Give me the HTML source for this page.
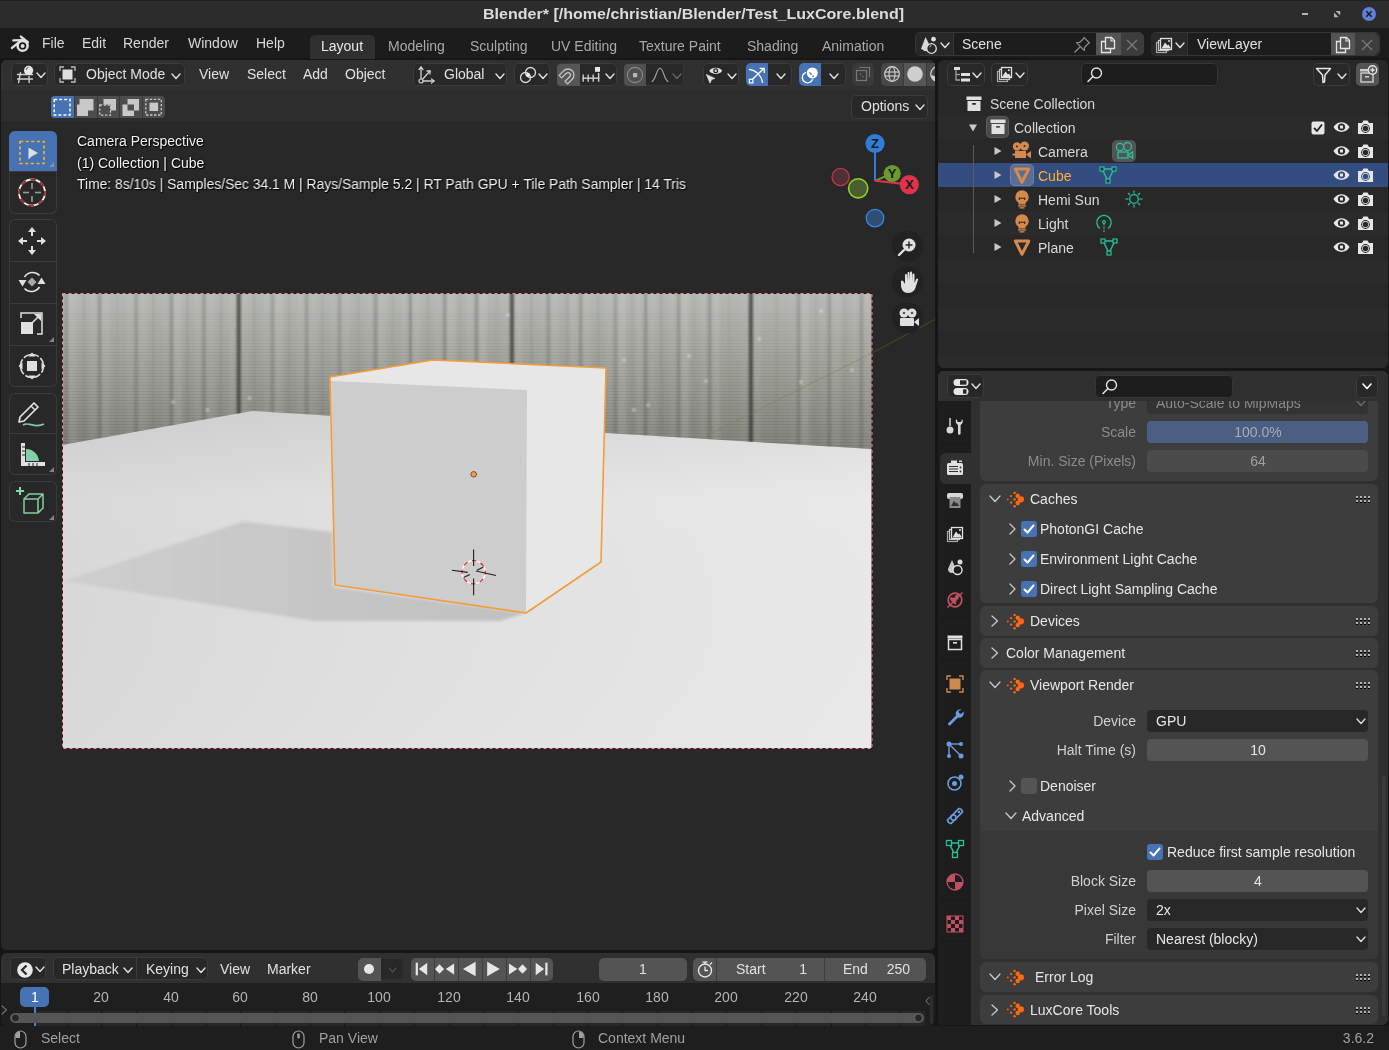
<!DOCTYPE html>
<html><head><meta charset="utf-8"><style>
html,body{margin:0;padding:0;}
body{width:1389px;height:1050px;overflow:hidden;position:relative;background:#161616;font-family:"Liberation Sans",sans-serif;}
body>div,body>svg{position:absolute;}
svg{overflow:visible;}
</style></head><body>
<div style="left:0px;top:0px;width:1389px;height:28px;background:#2c2c2c;"></div>
<div style="left:483.00px;top:5.80px;font-size:15px;line-height:15px;color:#dcdcdc;white-space:pre;font-weight:bold;transform:scaleX(1.0687);transform-origin:left center;will-change:transform;">Blender* [/home/christian/Blender/Test_LuxCore.blend]</div>
<div style="left:0px;top:28px;width:1389px;height:29.5px;background:#1c1c1c;"></div>
<div style="left:42.00px;top:36.45px;font-size:14px;line-height:14px;color:#d8d8d8;white-space:pre;will-change:transform;">File</div>
<div style="left:81.50px;top:36.45px;font-size:14px;line-height:14px;color:#d8d8d8;white-space:pre;will-change:transform;">Edit</div>
<div style="left:123.40px;top:36.45px;font-size:14px;line-height:14px;color:#d8d8d8;white-space:pre;will-change:transform;">Render</div>
<div style="left:187.50px;top:36.45px;font-size:14px;line-height:14px;color:#d8d8d8;white-space:pre;will-change:transform;">Window</div>
<div style="left:255.60px;top:36.45px;font-size:14px;line-height:14px;color:#d8d8d8;white-space:pre;will-change:transform;">Help</div>
<div style="left:310px;top:35px;width:65px;height:24px;background:#303030;border-radius:5px 5px 0 0;"></div>
<div style="left:321.00px;top:38.95px;font-size:14px;line-height:14px;color:#e8e8e8;white-space:pre;will-change:transform;">Layout</div>
<div style="left:388.00px;top:38.95px;font-size:14px;line-height:14px;color:#a8a8a8;white-space:pre;will-change:transform;">Modeling</div>
<div style="left:470.00px;top:38.95px;font-size:14px;line-height:14px;color:#a8a8a8;white-space:pre;will-change:transform;">Sculpting</div>
<div style="left:551.00px;top:38.95px;font-size:14px;line-height:14px;color:#a8a8a8;white-space:pre;will-change:transform;">UV Editing</div>
<div style="left:639.00px;top:38.95px;font-size:14px;line-height:14px;color:#a8a8a8;white-space:pre;will-change:transform;">Texture Paint</div>
<div style="left:747.00px;top:38.95px;font-size:14px;line-height:14px;color:#a8a8a8;white-space:pre;will-change:transform;">Shading</div>
<div style="left:822.00px;top:38.95px;font-size:14px;line-height:14px;color:#a8a8a8;white-space:pre;will-change:transform;">Animation</div>
<div style="left:1px;top:60px;width:934px;height:890px;background:#282828;border-radius:6px;overflow:hidden;"></div>
<div style="left:1px;top:60px;width:934px;height:30px;background:#303030;border-radius:6px 6px 0 0;"></div>
<div style="left:1px;top:90px;width:934px;height:31px;background:#2d2d2d;"></div>
<div style="left:938px;top:60px;width:450px;height:308px;background:#282828;border-radius:6px;"></div>
<div style="left:938px;top:371px;width:450px;height:654px;background:#303030;border-radius:6px;"></div>
<div style="left:1px;top:953px;width:934px;height:72.5px;background:#1f1f1f;border-radius:6px;"></div>
<div style="left:1px;top:953px;width:934px;height:30px;background:#303030;border-radius:6px 6px 0 0;"></div>
<div style="left:0px;top:1026px;width:1389px;height:24px;background:#1e1e1e;"></div>
<svg style="left:62px;top:293px;" width="810" height="456" viewBox="0 0 810 456">
<defs>
  <linearGradient id="wallg" x1="0" y1="0" x2="0" y2="1">
    <stop offset="0" stop-color="#b6b8b4"/>
    <stop offset="0.5" stop-color="#9c9d96"/>
    <stop offset="1" stop-color="#80817a"/>
  </linearGradient>
  <linearGradient id="floorh" x1="0" y1="0" x2="1" y2="0">
    <stop offset="0" stop-color="#d9d9d9"/>
    <stop offset="0.45" stop-color="#e1e1e1"/>
    <stop offset="1" stop-color="#e9e9e9"/>
  </linearGradient>
  <linearGradient id="floorv" x1="0" y1="0" x2="0" y2="1">
    <stop offset="0.22" stop-color="#000" stop-opacity="0.07"/>
    <stop offset="0.45" stop-color="#000" stop-opacity="0.0"/>
    <stop offset="1" stop-color="#fff" stop-opacity="0.02"/>
  </linearGradient>
  <linearGradient id="shadg" x1="0" y1="0" x2="1" y2="0">
    <stop offset="0" stop-color="#cecece"/>
    <stop offset="0.5" stop-color="#c6c6c6"/>
    <stop offset="1" stop-color="#c0c0c0"/>
  </linearGradient>
  <clipPath id="wallclip"><polygon points="0,0 810,0 810,156 544,140 190,118 0,152"/></clipPath>
  <filter id="blur1" x="-10%" y="-10%" width="120%" height="120%"><feGaussianBlur stdDeviation="1.6"/></filter>
  <filter id="blur05" x="-10%" y="-10%" width="120%" height="120%"><feGaussianBlur stdDeviation="0.9"/></filter>
  <filter id="blur2" x="-10%" y="-20%" width="120%" height="140%"><feGaussianBlur stdDeviation="1.5"/></filter>
</defs>
<rect x="0" y="0" width="810" height="456" fill="url(#floorh)"/>
<rect x="0" y="0" width="810" height="456" fill="url(#floorv)"/>
<g clip-path="url(#wallclip)">
<rect x="0" y="0" width="810" height="160" fill="url(#wallg)"/>
<g filter="url(#blur1)"><rect x="6.6" y="0" width="8" height="170" fill="#ffffff" opacity="0.08"/>
<rect x="-5.4" y="0" width="6" height="170" fill="#ffffff" opacity="0.05"/>
<rect x="1.6" y="0" width="3" height="170" fill="#50504a" opacity="0.16"/>
<rect x="40.0" y="0" width="8" height="170" fill="#ffffff" opacity="0.08"/>
<rect x="28.0" y="0" width="6" height="170" fill="#ffffff" opacity="0.05"/>
<rect x="35.0" y="0" width="3" height="170" fill="#50504a" opacity="0.14"/>
<rect x="76.7" y="0" width="8" height="170" fill="#ffffff" opacity="0.06"/>
<rect x="64.7" y="0" width="6" height="170" fill="#ffffff" opacity="0.05"/>
<rect x="71.7" y="0" width="3" height="170" fill="#50504a" opacity="0.14"/>
<rect x="111.8" y="0" width="8" height="170" fill="#ffffff" opacity="0.10"/>
<rect x="99.8" y="0" width="6" height="170" fill="#ffffff" opacity="0.03"/>
<rect x="106.8" y="0" width="3" height="170" fill="#50504a" opacity="0.12"/>
<rect x="144.5" y="0" width="8" height="170" fill="#ffffff" opacity="0.06"/>
<rect x="132.5" y="0" width="6" height="170" fill="#ffffff" opacity="0.06"/>
<rect x="139.5" y="0" width="3" height="170" fill="#50504a" opacity="0.14"/>
<rect x="178.8" y="0" width="8" height="170" fill="#ffffff" opacity="0.05"/>
<rect x="166.8" y="0" width="6" height="170" fill="#ffffff" opacity="0.07"/>
<rect x="173.8" y="0" width="3" height="170" fill="#50504a" opacity="0.16"/>
<rect x="213.0" y="0" width="8" height="170" fill="#ffffff" opacity="0.09"/>
<rect x="201.0" y="0" width="6" height="170" fill="#ffffff" opacity="0.05"/>
<rect x="208.0" y="0" width="3" height="170" fill="#50504a" opacity="0.11"/>
<rect x="247.0" y="0" width="8" height="170" fill="#ffffff" opacity="0.05"/>
<rect x="235.0" y="0" width="6" height="170" fill="#ffffff" opacity="0.05"/>
<rect x="242.0" y="0" width="3" height="170" fill="#50504a" opacity="0.10"/>
<rect x="280.0" y="0" width="8" height="170" fill="#ffffff" opacity="0.06"/>
<rect x="268.0" y="0" width="6" height="170" fill="#ffffff" opacity="0.04"/>
<rect x="275.0" y="0" width="3" height="170" fill="#50504a" opacity="0.10"/>
<rect x="316.0" y="0" width="8" height="170" fill="#ffffff" opacity="0.08"/>
<rect x="304.0" y="0" width="6" height="170" fill="#ffffff" opacity="0.05"/>
<rect x="311.0" y="0" width="3" height="170" fill="#50504a" opacity="0.15"/>
<rect x="350.6" y="0" width="8" height="170" fill="#ffffff" opacity="0.08"/>
<rect x="338.6" y="0" width="6" height="170" fill="#ffffff" opacity="0.06"/>
<rect x="345.6" y="0" width="3" height="170" fill="#50504a" opacity="0.13"/>
<rect x="385.0" y="0" width="8" height="170" fill="#ffffff" opacity="0.09"/>
<rect x="373.0" y="0" width="6" height="170" fill="#ffffff" opacity="0.05"/>
<rect x="380.0" y="0" width="3" height="170" fill="#50504a" opacity="0.12"/>
<rect x="417.0" y="0" width="8" height="170" fill="#ffffff" opacity="0.11"/>
<rect x="405.0" y="0" width="6" height="170" fill="#ffffff" opacity="0.07"/>
<rect x="412.0" y="0" width="3" height="170" fill="#50504a" opacity="0.15"/>
<rect x="452.0" y="0" width="8" height="170" fill="#ffffff" opacity="0.09"/>
<rect x="440.0" y="0" width="6" height="170" fill="#ffffff" opacity="0.04"/>
<rect x="447.0" y="0" width="3" height="170" fill="#50504a" opacity="0.11"/>
<rect x="489.0" y="0" width="8" height="170" fill="#ffffff" opacity="0.07"/>
<rect x="477.0" y="0" width="6" height="170" fill="#ffffff" opacity="0.03"/>
<rect x="484.0" y="0" width="3" height="170" fill="#50504a" opacity="0.15"/>
<rect x="521.0" y="0" width="8" height="170" fill="#ffffff" opacity="0.07"/>
<rect x="509.0" y="0" width="6" height="170" fill="#ffffff" opacity="0.06"/>
<rect x="516.0" y="0" width="3" height="170" fill="#50504a" opacity="0.12"/>
<rect x="556.0" y="0" width="8" height="170" fill="#ffffff" opacity="0.11"/>
<rect x="544.0" y="0" width="6" height="170" fill="#ffffff" opacity="0.06"/>
<rect x="551.0" y="0" width="3" height="170" fill="#50504a" opacity="0.10"/>
<rect x="586.0" y="0" width="8" height="170" fill="#ffffff" opacity="0.06"/>
<rect x="574.0" y="0" width="6" height="170" fill="#ffffff" opacity="0.07"/>
<rect x="581.0" y="0" width="3" height="170" fill="#50504a" opacity="0.13"/>
<rect x="619.0" y="0" width="8" height="170" fill="#ffffff" opacity="0.11"/>
<rect x="607.0" y="0" width="6" height="170" fill="#ffffff" opacity="0.05"/>
<rect x="614.0" y="0" width="3" height="170" fill="#50504a" opacity="0.10"/>
<rect x="650.0" y="0" width="8" height="170" fill="#ffffff" opacity="0.09"/>
<rect x="638.0" y="0" width="6" height="170" fill="#ffffff" opacity="0.06"/>
<rect x="645.0" y="0" width="3" height="170" fill="#50504a" opacity="0.12"/>
<rect x="691.0" y="0" width="8" height="170" fill="#ffffff" opacity="0.06"/>
<rect x="679.0" y="0" width="6" height="170" fill="#ffffff" opacity="0.04"/>
<rect x="686.0" y="0" width="3" height="170" fill="#50504a" opacity="0.16"/>
<rect x="739.0" y="0" width="8" height="170" fill="#ffffff" opacity="0.10"/>
<rect x="727.0" y="0" width="6" height="170" fill="#ffffff" opacity="0.03"/>
<rect x="734.0" y="0" width="3" height="170" fill="#50504a" opacity="0.11"/>
<rect x="770.0" y="0" width="8" height="170" fill="#ffffff" opacity="0.06"/>
<rect x="758.0" y="0" width="6" height="170" fill="#ffffff" opacity="0.03"/>
<rect x="765.0" y="0" width="3" height="170" fill="#50504a" opacity="0.15"/>
<rect x="802.0" y="0" width="8" height="170" fill="#ffffff" opacity="0.06"/>
<rect x="790.0" y="0" width="6" height="170" fill="#ffffff" opacity="0.05"/>
<rect x="797.0" y="0" width="3" height="170" fill="#50504a" opacity="0.13"/></g><g filter="url(#blur05)"><rect x="4.0" y="0" width="1.3" height="170" fill="#45453f" opacity="0.29"/>
<rect x="21.7" y="0" width="1" height="170" fill="#4a4a44" opacity="0.12"/>
<rect x="37.4" y="0" width="1.3" height="170" fill="#45453f" opacity="0.38"/>
<rect x="54.3" y="0" width="1" height="170" fill="#4a4a44" opacity="0.16"/>
<rect x="74.1" y="0" width="1.3" height="170" fill="#45453f" opacity="0.29"/>
<rect x="90.8" y="0" width="1" height="170" fill="#4a4a44" opacity="0.25"/>
<rect x="109.2" y="0" width="1.3" height="170" fill="#45453f" opacity="0.41"/>
<rect x="124.9" y="0" width="1" height="170" fill="#4a4a44" opacity="0.23"/>
<rect x="141.9" y="0" width="1.3" height="170" fill="#45453f" opacity="0.29"/>
<rect x="158.7" y="0" width="1" height="170" fill="#4a4a44" opacity="0.23"/>
<rect x="176.2" y="0" width="1.3" height="170" fill="#45453f" opacity="0.38"/>
<rect x="191.8" y="0" width="1" height="170" fill="#4a4a44" opacity="0.25"/>
<rect x="210.4" y="0" width="1.3" height="170" fill="#45453f" opacity="0.29"/>
<rect x="226.5" y="0" width="1" height="170" fill="#4a4a44" opacity="0.22"/>
<rect x="244.4" y="0" width="1.3" height="170" fill="#45453f" opacity="0.32"/>
<rect x="260.2" y="0" width="1" height="170" fill="#4a4a44" opacity="0.11"/>
<rect x="277.4" y="0" width="1.3" height="170" fill="#45453f" opacity="0.27"/>
<rect x="295.8" y="0" width="1" height="170" fill="#4a4a44" opacity="0.14"/>
<rect x="313.4" y="0" width="1.3" height="170" fill="#45453f" opacity="0.37"/>
<rect x="330.3" y="0" width="1" height="170" fill="#4a4a44" opacity="0.17"/>
<rect x="348.0" y="0" width="1.3" height="170" fill="#45453f" opacity="0.44"/>
<rect x="365.2" y="0" width="1" height="170" fill="#4a4a44" opacity="0.19"/>
<rect x="382.4" y="0" width="1.3" height="170" fill="#45453f" opacity="0.42"/>
<rect x="397.2" y="0" width="1" height="170" fill="#4a4a44" opacity="0.12"/>
<rect x="414.4" y="0" width="1.3" height="170" fill="#45453f" opacity="0.43"/>
<rect x="433.3" y="0" width="1" height="170" fill="#4a4a44" opacity="0.14"/>
<rect x="449.4" y="0" width="1.3" height="170" fill="#45453f" opacity="0.29"/>
<rect x="469.0" y="0" width="1" height="170" fill="#4a4a44" opacity="0.24"/>
<rect x="486.4" y="0" width="1.3" height="170" fill="#45453f" opacity="0.29"/>
<rect x="504.3" y="0" width="1" height="170" fill="#4a4a44" opacity="0.23"/>
<rect x="518.4" y="0" width="1.3" height="170" fill="#45453f" opacity="0.37"/>
<rect x="535.7" y="0" width="1" height="170" fill="#4a4a44" opacity="0.12"/>
<rect x="553.4" y="0" width="1.3" height="170" fill="#45453f" opacity="0.26"/>
<rect x="570.4" y="0" width="1" height="170" fill="#4a4a44" opacity="0.14"/>
<rect x="583.4" y="0" width="1.3" height="170" fill="#45453f" opacity="0.39"/>
<rect x="599.0" y="0" width="1" height="170" fill="#4a4a44" opacity="0.22"/>
<rect x="616.4" y="0" width="1.3" height="170" fill="#45453f" opacity="0.37"/>
<rect x="631.2" y="0" width="1" height="170" fill="#4a4a44" opacity="0.13"/>
<rect x="647.4" y="0" width="1.3" height="170" fill="#45453f" opacity="0.39"/>
<rect x="666.3" y="0" width="1" height="170" fill="#4a4a44" opacity="0.13"/>
<rect x="688.4" y="0" width="1.3" height="170" fill="#45453f" opacity="0.36"/>
<rect x="713.9" y="0" width="1" height="170" fill="#4a4a44" opacity="0.19"/>
<rect x="736.4" y="0" width="1.3" height="170" fill="#45453f" opacity="0.31"/>
<rect x="753.7" y="0" width="1" height="170" fill="#4a4a44" opacity="0.13"/>
<rect x="767.4" y="0" width="1.3" height="170" fill="#45453f" opacity="0.25"/>
<rect x="782.6" y="0" width="1" height="170" fill="#4a4a44" opacity="0.17"/>
<rect x="799.4" y="0" width="1.3" height="170" fill="#45453f" opacity="0.26"/>
<rect x="174.8" y="0" width="4" height="170" fill="#2e2e2a" opacity="0.6"/>
<rect x="448" y="0" width="4" height="170" fill="#2e2e2a" opacity="0.6"/>
<rect x="687" y="0" width="4" height="170" fill="#2e2e2a" opacity="0.6"/></g><rect x="0" y="20" width="810" height="1" fill="#3a3a34" opacity="0.040"/><rect x="0" y="23" width="810" height="1" fill="#3a3a34" opacity="0.040"/><rect x="0" y="26" width="810" height="1" fill="#3a3a34" opacity="0.040"/><rect x="0" y="29" width="810" height="1" fill="#3a3a34" opacity="0.040"/><rect x="0" y="32" width="810" height="1" fill="#3a3a34" opacity="0.042"/><rect x="0" y="35" width="810" height="1" fill="#3a3a34" opacity="0.044"/><rect x="0" y="38" width="810" height="1" fill="#3a3a34" opacity="0.046"/><rect x="0" y="41" width="810" height="1" fill="#3a3a34" opacity="0.048"/><rect x="0" y="44" width="810" height="1" fill="#3a3a34" opacity="0.051"/><rect x="0" y="47" width="810" height="1" fill="#3a3a34" opacity="0.053"/><rect x="0" y="50" width="810" height="1" fill="#3a3a34" opacity="0.055"/><rect x="0" y="53" width="810" height="1" fill="#3a3a34" opacity="0.058"/><rect x="0" y="56" width="810" height="1" fill="#3a3a34" opacity="0.060"/><rect x="0" y="59" width="810" height="1" fill="#3a3a34" opacity="0.062"/><rect x="0" y="62" width="810" height="1" fill="#3a3a34" opacity="0.065"/><rect x="0" y="65" width="810" height="1" fill="#3a3a34" opacity="0.067"/><rect x="0" y="68" width="810" height="1" fill="#3a3a34" opacity="0.069"/><rect x="0" y="71" width="810" height="1" fill="#3a3a34" opacity="0.072"/><rect x="0" y="74" width="810" height="1" fill="#3a3a34" opacity="0.074"/><rect x="0" y="77" width="810" height="1" fill="#3a3a34" opacity="0.076"/><rect x="0" y="80" width="810" height="1" fill="#3a3a34" opacity="0.078"/><rect x="0" y="83" width="810" height="1" fill="#3a3a34" opacity="0.081"/><rect x="0" y="86" width="810" height="1" fill="#3a3a34" opacity="0.083"/><rect x="0" y="89" width="810" height="1" fill="#3a3a34" opacity="0.085"/><rect x="0" y="92" width="810" height="1" fill="#3a3a34" opacity="0.088"/><rect x="0" y="95" width="810" height="1" fill="#3a3a34" opacity="0.090"/><rect x="0" y="98" width="810" height="1" fill="#3a3a34" opacity="0.092"/><rect x="0" y="101" width="810" height="1" fill="#3a3a34" opacity="0.095"/><rect x="0" y="104" width="810" height="1" fill="#3a3a34" opacity="0.097"/><rect x="0" y="107" width="810" height="1" fill="#3a3a34" opacity="0.099"/><rect x="0" y="110" width="810" height="1" fill="#3a3a34" opacity="0.102"/><rect x="0" y="113" width="810" height="1" fill="#3a3a34" opacity="0.104"/><rect x="0" y="116" width="810" height="1" fill="#3a3a34" opacity="0.106"/><rect x="0" y="119" width="810" height="1" fill="#3a3a34" opacity="0.108"/><rect x="0" y="122" width="810" height="1" fill="#3a3a34" opacity="0.111"/><rect x="0" y="125" width="810" height="1" fill="#3a3a34" opacity="0.113"/><rect x="0" y="128" width="810" height="1" fill="#3a3a34" opacity="0.115"/><rect x="0" y="131" width="810" height="1" fill="#3a3a34" opacity="0.118"/><rect x="0" y="134" width="810" height="1" fill="#3a3a34" opacity="0.120"/><rect x="0" y="137" width="810" height="1" fill="#3a3a34" opacity="0.122"/><rect x="0" y="140" width="810" height="1" fill="#3a3a34" opacity="0.125"/><rect x="0" y="143" width="810" height="1" fill="#3a3a34" opacity="0.127"/><rect x="0" y="146" width="810" height="1" fill="#3a3a34" opacity="0.129"/><rect x="0" y="149" width="810" height="1" fill="#3a3a34" opacity="0.132"/><rect x="0" y="152" width="810" height="1" fill="#3a3a34" opacity="0.134"/><rect x="0" y="155" width="810" height="1" fill="#3a3a34" opacity="0.136"/><rect x="0" y="158" width="810" height="1" fill="#3a3a34" opacity="0.138"/>
<circle cx="111" cy="109" r="1.8" fill="#eeeeee" opacity="0.55" filter="url(#blur05)"/><circle cx="145.6" cy="117" r="1.8" fill="#eeeeee" opacity="0.55" filter="url(#blur05)"/><circle cx="187.5" cy="105" r="1.8" fill="#eeeeee" opacity="0.55" filter="url(#blur05)"/><circle cx="446" cy="22" r="1.8" fill="#eeeeee" opacity="0.55" filter="url(#blur05)"/><circle cx="418" cy="118" r="1.8" fill="#eeeeee" opacity="0.55" filter="url(#blur05)"/><circle cx="562" cy="67" r="1.8" fill="#eeeeee" opacity="0.55" filter="url(#blur05)"/><circle cx="572" cy="117" r="1.8" fill="#eeeeee" opacity="0.55" filter="url(#blur05)"/><circle cx="586" cy="112" r="1.8" fill="#eeeeee" opacity="0.55" filter="url(#blur05)"/><circle cx="627" cy="63" r="1.8" fill="#eeeeee" opacity="0.55" filter="url(#blur05)"/><circle cx="644" cy="88" r="1.8" fill="#eeeeee" opacity="0.55" filter="url(#blur05)"/><circle cx="697" cy="46" r="1.8" fill="#eeeeee" opacity="0.55" filter="url(#blur05)"/><circle cx="739" cy="89" r="1.8" fill="#eeeeee" opacity="0.55" filter="url(#blur05)"/><circle cx="790" cy="77" r="1.8" fill="#eeeeee" opacity="0.55" filter="url(#blur05)"/><circle cx="759" cy="18" r="1.8" fill="#eeeeee" opacity="0.55" filter="url(#blur05)"/>
</g>
<line x1="640" y1="145" x2="810" y2="60" stroke="#6d8a4a" stroke-width="1" opacity="0.5"/>
<polygon points="1,288 181.6,228.6 271,239 271,294 464,320 438,328 253,328" fill="url(#shadg)" filter="url(#blur2)"/>
<polygon points="268,84 371,67 544,75 539,269 464,320 273,292" fill="#e7e7e7"/>
<polygon points="269,88 465,97 464,320 273,292" fill="#cdcdcd"/>
<polygon points="268,84 371,67 544,75 539,269 464,320 273,292" fill="none" stroke="#f39c3c" stroke-width="1.6" stroke-linejoin="round"/>
<circle cx="411.7" cy="181.3" r="2.8" fill="#f5a032" stroke="#333" stroke-width="0.7"/>
<rect x="0.5" y="0.5" width="809.5" height="455" fill="none" stroke="#1a1a1a" stroke-width="1"/>
<rect x="0.5" y="0.5" width="809.5" height="455" fill="none" stroke="#ff8888" stroke-width="1" stroke-dasharray="3,3"/>
</svg>
<svg style="left:450px;top:548px;" width="48" height="48" viewBox="0 0 48 48">
<circle cx="23.6" cy="24.2" r="11.6" fill="none" stroke="#ffffff" stroke-width="1.3"/>
<circle cx="23.6" cy="24.2" r="11.6" fill="none" stroke="#e02828" stroke-width="1.3" stroke-dasharray="4.55,4.55" stroke-dashoffset="2"/>
<g stroke="#202020" stroke-width="1.1">
<line x1="23.6" y1="1.4" x2="23.6" y2="18"/><line x1="23.6" y1="30.6" x2="23.6" y2="47.3"/>
<line x1="2" y1="22.3" x2="17.8" y2="24.4"/><line x1="26" y1="23" x2="46" y2="27.5"/>
<line x1="13.6" y1="29.6" x2="19.9" y2="26.4"/><line x1="27" y1="22.3" x2="33.4" y2="19"/></g></svg>
<div style="left:11px;top:63px;width:37px;height:23px;background:#282828;border-radius:5px;box-shadow:inset 0 0 0 1px #3b3b3b;"></div>
<svg style="left:17px;top:65px;" width="22" height="18" viewBox="0 0 22 18">
<g stroke="#cfcfcf" stroke-width="1.4" fill="none" stroke-linecap="round">
<line x1="0.5" y1="9.5" x2="15.5" y2="9.5"/><line x1="0.5" y1="14" x2="15.5" y2="14"/>
<line x1="3.4" y1="7.8" x2="1.6" y2="17.6"/><line x1="12" y1="11.5" x2="12.2" y2="17.6"/></g>
<circle cx="11.6" cy="5.4" r="4.6" fill="#e6e6e6"/><path d="M9.2,4.9 a2.6,2.6 0 0 1 2.3,-2.4" stroke="#444" stroke-width="0.9" fill="none"/></svg>
<svg style="left:35.5px;top:72.25px;" width="10" height="6.5" viewBox="0 0 10 6.5"><polyline points="1,1 5.0,5.5 9,1" fill="none" stroke="#e0e0e0" stroke-width="1.4" stroke-linecap="round" stroke-linejoin="round"/></svg>
<div style="left:54px;top:63px;width:131px;height:23px;background:#282828;border-radius:5px;box-shadow:inset 0 0 0 1px #3b3b3b;"></div>
<svg style="left:59px;top:66px;" width="18" height="18" viewBox="0 0 18 18">
<g stroke="#bdbdbd" stroke-width="1.3" fill="none">
<polyline points="1,5 1,1 5,1"/><polyline points="12,1 16,1 16,5"/><polyline points="16,12 16,16 12,16"/><polyline points="5,16 1,16 1,12"/></g>
<rect x="3.5" y="3.5" width="10" height="10" fill="#e0e0e0"/></svg>
<div style="left:85.50px;top:67.15px;font-size:14px;line-height:14px;color:#e0e0e0;white-space:pre;will-change:transform;">Object Mode</div>
<svg style="left:170.5px;top:72.75px;" width="10" height="6.5" viewBox="0 0 10 6.5"><polyline points="1,1 5.0,5.5 9,1" fill="none" stroke="#e0e0e0" stroke-width="1.4" stroke-linecap="round" stroke-linejoin="round"/></svg>
<div style="left:199.00px;top:67.15px;font-size:14px;line-height:14px;color:#e0e0e0;white-space:pre;will-change:transform;">View</div>
<div style="left:246.50px;top:67.15px;font-size:14px;line-height:14px;color:#e0e0e0;white-space:pre;will-change:transform;">Select</div>
<div style="left:303.00px;top:67.15px;font-size:14px;line-height:14px;color:#e0e0e0;white-space:pre;will-change:transform;">Add</div>
<div style="left:345.00px;top:67.15px;font-size:14px;line-height:14px;color:#e0e0e0;white-space:pre;will-change:transform;">Object</div>
<div style="left:413px;top:63px;width:94px;height:23px;background:#282828;border-radius:5px;box-shadow:inset 0 0 0 1px #3b3b3b;"></div>
<svg style="left:418px;top:66px;" width="18" height="18" viewBox="0 0 18 18">
<g stroke="#cfcfcf" stroke-width="1.3" fill="none" stroke-linecap="round">
<line x1="3" y1="15" x2="3" y2="1"/><polyline points="1,3.5 3,1 5,3.5"/>
<line x1="3" y1="15" x2="16" y2="15"/><polyline points="13.5,13 16,15 13.5,17"/>
<line x1="3" y1="15" x2="12" y2="5"/><polyline points="9,5 12,5 12,8"/></g>
<circle cx="3" cy="15" r="2" fill="#282828" stroke="#cfcfcf" stroke-width="1.2"/></svg>
<div style="left:444.40px;top:67.15px;font-size:14px;line-height:14px;color:#e0e0e0;white-space:pre;will-change:transform;">Global</div>
<svg style="left:494.5px;top:72.75px;" width="10" height="6.5" viewBox="0 0 10 6.5"><polyline points="1,1 5.0,5.5 9,1" fill="none" stroke="#e0e0e0" stroke-width="1.4" stroke-linecap="round" stroke-linejoin="round"/></svg>
<div style="left:514px;top:63px;width:36px;height:23px;background:#282828;border-radius:5px;box-shadow:inset 0 0 0 1px #3b3b3b;"></div>
<svg style="left:518px;top:65px;" width="20" height="20" viewBox="0 0 20 20">
<circle cx="7.5" cy="12.5" r="5" fill="none" stroke="#d8d8d8" stroke-width="1.3"/>
<circle cx="12.5" cy="7.5" r="5" fill="none" stroke="#d8d8d8" stroke-width="1.3"/>
<circle cx="10" cy="10" r="1.9" fill="#f0f0f0"/></svg>
<svg style="left:537.5px;top:72.75px;" width="10" height="6.5" viewBox="0 0 10 6.5"><polyline points="1,1 5.0,5.5 9,1" fill="none" stroke="#e0e0e0" stroke-width="1.4" stroke-linecap="round" stroke-linejoin="round"/></svg>
<div style="left:557px;top:63px;width:60px;height:23px;background:#282828;border-radius:5px;box-shadow:inset 0 0 0 1px #3b3b3b;"></div>
<div style="left:557px;top:64px;width:23px;height:22px;background:#565656;border-radius:4px 0 0 4px;"></div>
<svg style="left:558px;top:65px;" width="20" height="20" viewBox="0 0 20 20">
<path d="M4,3.5 L4,10 A6,6 0 0 0 16,10 L16,3.5 L12.4,3.5 L12.4,10 A2.4,2.4 0 0 1 7.6,10 L7.6,3.5 Z" fill="none" stroke="#c4c4c4" stroke-width="1.3" stroke-linejoin="round" transform="rotate(-135 10 10)"/></svg>
<svg style="left:581px;top:65px;" width="22" height="20" viewBox="0 0 22 20">
<g stroke="#cfcfcf" stroke-width="1.4" fill="none"><line x1="1.5" y1="13.2" x2="18.5" y2="13.2"/>
<line x1="2.2" y1="9.5" x2="2.2" y2="16.8"/><line x1="7.2" y1="9.5" x2="7.2" y2="16.8"/><line x1="12.2" y1="9.5" x2="12.2" y2="16.8"/><line x1="17.6" y1="8" x2="17.6" y2="16.8"/></g>
<rect x="14" y="2" width="5" height="4.8" fill="#e6e6e6"/></svg>
<svg style="left:604.5px;top:72.75px;" width="10" height="6.5" viewBox="0 0 10 6.5"><polyline points="1,1 5.0,5.5 9,1" fill="none" stroke="#e0e0e0" stroke-width="1.4" stroke-linecap="round" stroke-linejoin="round"/></svg>
<div style="left:624px;top:63px;width:60px;height:23px;background:#282828;border-radius:5px;box-shadow:inset 0 0 0 1px #363636;"></div>
<div style="left:624px;top:64px;width:22px;height:22px;background:#505050;border-radius:4px 0 0 4px;"></div>
<svg style="left:625px;top:65px;" width="20" height="20" viewBox="0 0 20 20">
<circle cx="10" cy="10" r="7.6" fill="none" stroke="#8a8a8a" stroke-width="1.1"/>
<rect x="8" y="8" width="4.2" height="4.2" fill="#b8b8b8"/></svg>
<svg style="left:650px;top:65px;" width="20" height="20" viewBox="0 0 20 20">
<path d="M1.5,16.7 C5.5,16.7 6.5,3 10,3 C13.5,3 14.5,16.7 18.5,16.7" fill="none" stroke="#a0a0a0" stroke-width="1.2"/></svg>
<svg style="left:672.0px;top:72.75px;" width="10" height="6.5" viewBox="0 0 10 6.5"><polyline points="1,1 5.0,5.5 9,1" fill="none" stroke="#666666" stroke-width="1.4" stroke-linecap="round" stroke-linejoin="round"/></svg>
<div style="left:703px;top:63px;width:36px;height:23px;background:#282828;border-radius:5px;box-shadow:inset 0 0 0 1px #3b3b3b;"></div>
<svg style="left:706px;top:65px;" width="20" height="20" viewBox="0 0 20 20">
<path d="M3.2,5.8 C5.5,1.6 14,1.6 16.2,5.8 C14,10 5.5,10 3.2,5.8 Z" fill="#e0e0e0"/>
<circle cx="9.7" cy="5.8" r="2.5" fill="#282828"/><circle cx="9.7" cy="5.8" r="1.2" fill="#e0e0e0"/>
<path d="M0.3,9.4 L9,13.4 L5.6,14.5 L4,18.2 Z" fill="#e0e0e0" stroke="#e0e0e0" stroke-width="0.6" stroke-linejoin="round"/></svg>
<svg style="left:726.5px;top:72.75px;" width="10" height="6.5" viewBox="0 0 10 6.5"><polyline points="1,1 5.0,5.5 9,1" fill="none" stroke="#e0e0e0" stroke-width="1.4" stroke-linecap="round" stroke-linejoin="round"/></svg>
<div style="left:746px;top:63px;width:46px;height:23px;background:#282828;border-radius:5px;box-shadow:inset 0 0 0 1px #3b3b3b;"></div>
<div style="left:746px;top:63px;width:22px;height:23px;background:#4772b3;border-radius:5px 0 0 5px;"></div>
<svg style="left:747px;top:65px;" width="20" height="20" viewBox="0 0 20 20">
<path d="M2,4.3 C8.5,5 14.3,10 15.6,17.8" fill="none" stroke="#fff" stroke-width="1.3"/>
<line x1="5" y1="14.8" x2="17" y2="3.3" stroke="#fff" stroke-width="1.3"/>
<polyline points="12.6,3.3 17.2,3.3 17.2,7.9" fill="none" stroke="#fff" stroke-width="1.3"/>
<rect x="2.3" y="14.3" width="3.6" height="3.6" fill="#4772b3" stroke="#fff" stroke-width="1.2"/></svg>
<svg style="left:775.5px;top:72.75px;" width="10" height="6.5" viewBox="0 0 10 6.5"><polyline points="1,1 5.0,5.5 9,1" fill="none" stroke="#e0e0e0" stroke-width="1.4" stroke-linecap="round" stroke-linejoin="round"/></svg>
<div style="left:799px;top:63px;width:47px;height:23px;background:#282828;border-radius:5px;box-shadow:inset 0 0 0 1px #3b3b3b;"></div>
<div style="left:799px;top:63px;width:22px;height:23px;background:#4772b3;border-radius:5px 0 0 5px;"></div>
<svg style="left:800px;top:65px;" width="20" height="20" viewBox="0 0 20 20">
<circle cx="7.6" cy="12.6" r="5.3" fill="none" stroke="#fff" stroke-width="1.4"/>
<circle cx="12.3" cy="8" r="6.3" fill="#4772b3"/>
<circle cx="12.3" cy="8" r="5.5" fill="#fff"/>
<path d="M9.5,7.5 L11.5,9.5 M12.5,10.5 l1.2,1.2" stroke="#4772b3" stroke-width="1.3"/></svg>
<svg style="left:828.5px;top:72.75px;" width="10" height="6.5" viewBox="0 0 10 6.5"><polyline points="1,1 5.0,5.5 9,1" fill="none" stroke="#e0e0e0" stroke-width="1.4" stroke-linecap="round" stroke-linejoin="round"/></svg>
<div style="left:852px;top:63px;width:22px;height:23px;background:#3a3a3a;border-radius:5px;box-shadow:inset 0 0 0 1px #3a3a3a;"></div>
<svg style="left:854px;top:65px;" width="18" height="18" viewBox="0 0 18 18">
<rect x="2.5" y="5.5" width="10" height="10" fill="none" stroke="#777" stroke-width="1.2"/>
<polyline points="5.5,2.5 15.5,2.5 15.5,12.5" fill="none" stroke="#777" stroke-width="1.2"/>
<circle cx="6.5" cy="9" r="0.8" fill="#777"/><circle cx="9" cy="11.5" r="0.8" fill="#777"/></svg>
<div style="left:880.6px;top:63px;width:54.4px;height:23px;background:#484848;border-radius:5px 0 0 5px;"></div>
<div style="left:903.5px;top:63px;width:23px;height:23px;background:#565656;"></div>
<div style="left:903px;top:63px;width:1px;height:23px;background:#3a3a3a;"></div>
<div style="left:926px;top:63px;width:1px;height:23px;background:#3a3a3a;"></div>
<svg style="left:883px;top:65px;" width="18" height="18" viewBox="0 0 18 18">
<circle cx="9" cy="9" r="7.3" fill="none" stroke="#d0d0d0" stroke-width="1.2"/>
<ellipse cx="9" cy="9" rx="3" ry="7.3" fill="none" stroke="#d0d0d0" stroke-width="1.1"/>
<line x1="1.7" y1="7" x2="16.3" y2="7" stroke="#d0d0d0" stroke-width="1.1"/><line x1="1.7" y1="11" x2="16.3" y2="11" stroke="#d0d0d0" stroke-width="1.1"/></svg>
<svg style="left:906px;top:65px;" width="18" height="18" viewBox="0 0 18 18"><circle cx="9" cy="9" r="7.8" fill="#cfcfcf"/></svg>
<svg style="left:929px;top:65px;overflow:hidden;" width="6" height="18" viewBox="0 0 6 18"><circle cx="9" cy="9" r="7.3" fill="none" stroke="#d0d0d0" stroke-width="1.3"/><path d="M2,10 a7,7 0 0 0 7,7 l0,-5 z" fill="#d0d0d0"/></svg>
<div style="left:935px;top:60px;width:3px;height:62px;background:#161616;"></div>
<div style="left:51px;top:96px;width:114px;height:22px;background:#4d4d4d;border-radius:4px;"></div>
<div style="left:51px;top:96px;width:23px;height:22px;background:#4772b3;border-radius:4px 0 0 4px;"></div>
<div style="left:74px;top:96px;width:1px;height:22px;background:#3a3a3a;"></div>
<div style="left:97px;top:96px;width:1px;height:22px;background:#3a3a3a;"></div>
<div style="left:119px;top:96px;width:1px;height:22px;background:#3a3a3a;"></div>
<div style="left:142px;top:96px;width:1px;height:22px;background:#3a3a3a;"></div>
<svg style="left:51px;top:96px;" width="23" height="22" viewBox="0 0 23 22"><rect x="3.2" y="3.4" width="15.8" height="15.6" fill="none" stroke="#fff" stroke-width="1.5" stroke-dasharray="3,2"/></svg>
<svg style="left:74px;top:96px;" width="23" height="22" viewBox="0 0 23 22"><path d="M5.5,3 L19.5,3 L19.5,14.5 L14,14.5 L14,20 L3,20 L3,8.5 L5.5,8.5 Z" fill="#c8c8c8"/></svg>
<svg style="left:97px;top:96px;" width="23" height="22" viewBox="0 0 23 22"><path d="M6.5,3 L19,3 L19,14.5 L13.5,14.5 L13.5,8.5 L6.5,8.5 Z" fill="#c8c8c8"/><path d="M2.8,9 L13.5,9 L13.5,19.2 L2.8,19.2 Z" fill="none" stroke="#c8c8c8" stroke-width="1.3" stroke-dasharray="2.4,1.6"/></svg>
<svg style="left:119px;top:96px;" width="23" height="22" viewBox="0 0 23 22"><path d="M8.5,3 L20,3 L20,14.5 L15,14.5 L15,20 L3.5,20 L3.5,8.5 L8.5,8.5 Z M8.5,8.5 L15,8.5 L15,14.5 L8.5,14.5 Z" fill="#c8c8c8" fill-rule="evenodd"/></svg>
<svg style="left:142px;top:96px;" width="23" height="22" viewBox="0 0 23 22"><rect x="3.8" y="3.4" width="15.5" height="15.6" fill="none" stroke="#c8c8c8" stroke-width="1.3" stroke-dasharray="2.4,1.6"/><rect x="7.5" y="6.6" width="8.6" height="8.4" fill="#c8c8c8"/></svg>
<div style="left:851px;top:95px;width:77px;height:24px;background:#282828;border-radius:5px;box-shadow:inset 0 0 0 1px #3b3b3b;"></div>
<div style="left:860.50px;top:99.15px;font-size:14px;line-height:14px;color:#e0e0e0;white-space:pre;will-change:transform;">Options</div>
<svg style="left:915.0px;top:104.25px;" width="10" height="6.5" viewBox="0 0 10 6.5"><polyline points="1,1 5.0,5.5 9,1" fill="none" stroke="#e0e0e0" stroke-width="1.4" stroke-linecap="round" stroke-linejoin="round"/></svg>
<div style="left:9px;top:131px;width:48px;height:83px;background:#282828;border-radius:6px;box-shadow:inset 0 0 0 1px #3a3a3a;"></div>
<div style="left:10px;top:171px;width:46px;height:1px;background:#3a3a3a;"></div>
<div style="left:9px;top:131px;width:48px;height:40px;background:#4772b3;border-radius:6px 6px 0 0;"></div>
<div style="left:9px;top:219px;width:48px;height:168px;background:#282828;border-radius:6px;box-shadow:inset 0 0 0 1px #3a3a3a;"></div>
<div style="left:10px;top:261px;width:46px;height:1px;background:#3a3a3a;"></div>
<div style="left:10px;top:303px;width:46px;height:1px;background:#3a3a3a;"></div>
<div style="left:10px;top:345px;width:46px;height:1px;background:#3a3a3a;"></div>
<div style="left:9px;top:393px;width:48px;height:82px;background:#282828;border-radius:6px;box-shadow:inset 0 0 0 1px #3a3a3a;"></div>
<div style="left:10px;top:433px;width:46px;height:1px;background:#3a3a3a;"></div>
<div style="left:9px;top:481px;width:48px;height:41px;background:#282828;border-radius:6px;box-shadow:inset 0 0 0 1px #3a3a3a;"></div>
<svg style="left:18px;top:139px;" width="30" height="26" viewBox="0 0 30 26">
<rect x="2" y="2.5" width="24" height="22" fill="none" stroke="#f0b030" stroke-width="1.6" stroke-dasharray="3.2,2.4"/>
<path d="M10.5,8.5 L10.5,20.5 L13.5,17.5 L20,14 Z" fill="#e0e0e0"/></svg>
<svg style="left:49px;top:162px;" width="5" height="5" viewBox="0 0 5 5"><polygon points="5,0 5,5 0,5" fill="#9a9a9a" opacity="0.8"/></svg>
<svg style="left:18px;top:178px;" width="30" height="30" viewBox="0 0 30 30">
<circle cx="14" cy="14.5" r="13" fill="none" stroke="#f0f0f0" stroke-width="1.8"/>
<circle cx="14" cy="14.5" r="13" fill="none" stroke="#a02828" stroke-width="1.8" stroke-dasharray="5.5,4.7" stroke-dashoffset="2"/>
<g stroke="#9a9a9a" stroke-width="1.6"><line x1="14" y1="5" x2="14" y2="11"/><line x1="14" y1="18" x2="14" y2="24"/>
<line x1="5" y1="14.5" x2="11" y2="14.5"/><line x1="17" y1="14.5" x2="23" y2="14.5"/></g></svg>
<svg style="left:17px;top:226px;" width="30" height="30" viewBox="0 0 30 30">
<g fill="#e0e0e0"><polygon points="15,1 19,6 11,6"/><polygon points="15,29 19,24 11,24"/>
<polygon points="1,15 6,11 6,19"/><polygon points="29,15 24,11 24,19"/></g>
<g stroke="#e0e0e0" stroke-width="2"><line x1="15" y1="6" x2="15" y2="10"/><line x1="15" y1="20" x2="15" y2="24"/>
<line x1="6" y1="15" x2="10" y2="15"/><line x1="20" y1="15" x2="24" y2="15"/></g></svg>
<svg style="left:17px;top:267px;" width="30" height="30" viewBox="0 0 30 30">
<path d="M7.5,10 A9.5,9.5 0 0 1 22.5,8.5" fill="none" stroke="#e0e0e0" stroke-width="1.6"/>
<path d="M22.5,20 A9.5,9.5 0 0 1 7.5,21.5" fill="none" stroke="#e0e0e0" stroke-width="1.6"/>
<polygon points="1.5,13 9.5,13 5.5,19.5" fill="#e0e0e0"/><polygon points="20.5,17 28.5,17 24.5,10.5" fill="#e0e0e0"/>
<polygon points="15,10.5 19.5,15 15,19.5 10.5,15" fill="#a8a8a8"/></svg>
<svg style="left:17px;top:309px;" width="30" height="30" viewBox="0 0 30 30">
<rect x="4" y="13" width="12" height="12" fill="#e0e0e0"/>
<polyline points="4,9 4,4 25,4 25,25 20,25" fill="none" stroke="#e0e0e0" stroke-width="1.5" stroke-dasharray="0"/>
<line x1="14" y1="15" x2="23" y2="6" stroke="#e0e0e0" stroke-width="1.6"/><polygon points="24,5 24,12 17,5" fill="#e0e0e0"/></svg>
<svg style="left:49px;top:337px;" width="5" height="5" viewBox="0 0 5 5"><polygon points="5,0 5,5 0,5" fill="#9a9a9a" opacity="0.8"/></svg>
<svg style="left:17px;top:351px;" width="30" height="30" viewBox="0 0 30 30">
<circle cx="15" cy="15" r="11.5" fill="none" stroke="#e0e0e0" stroke-width="1.5"/>
<rect x="10" y="10" width="10" height="10" fill="#e0e0e0"/>
<g fill="#e0e0e0"><polygon points="15,1.5 18.5,5.5 11.5,5.5"/><polygon points="15,28.5 18.5,24.5 11.5,24.5"/>
<polygon points="1.5,15 5.5,11.5 5.5,18.5"/><polygon points="28.5,15 24.5,11.5 24.5,18.5"/></g>
<circle cx="15" cy="15" r="11.5" fill="none" stroke="#282828" stroke-width="4" stroke-dasharray="2,16" stroke-dashoffset="-7"/></svg>
<svg style="left:17px;top:399px;" width="30" height="30" viewBox="0 0 30 30">
<path d="M3,18 L17,4 L21,8 L7,22 L2,23 Z" fill="none" stroke="#e0e0e0" stroke-width="1.7" stroke-linejoin="round"/>
<path d="M14,7 l4,4" stroke="#e0e0e0" stroke-width="1.5"/>
<path d="M6,26 C12,22 17,30 27,25" fill="none" stroke="#7ad0a0" stroke-width="1.7"/></svg>
<svg style="left:49px;top:467px;" width="5" height="5" viewBox="0 0 5 5"><polygon points="5,0 5,5 0,5" fill="#9a9a9a" opacity="0.8"/></svg>
<svg style="left:17px;top:440px;" width="30" height="30" viewBox="0 0 30 30">
<path d="M4,3 L8,3 L8,22 L28,22 L28,26 L4,26 Z" fill="#e0e0e0"/>
<path d="M9,9 A13,13 0 0 1 22,21 L9,21 Z" fill="#80d0a8"/>
<g stroke="#282828" stroke-width="1"><line x1="5" y1="7" x2="8" y2="7"/><line x1="5" y1="11" x2="8" y2="11"/><line x1="5" y1="15" x2="8" y2="15"/><line x1="12" y1="23" x2="12" y2="26"/><line x1="16" y1="23" x2="16" y2="26"/><line x1="20" y1="23" x2="20" y2="26"/></g></svg>
<svg style="left:15px;top:485px;" width="34" height="34" viewBox="0 0 34 34">
<path d="M5,2 L5,10 M1,6 L9,6" stroke="#80d8a8" stroke-width="2"/>
<path d="M9,14 L14,9 L28,9 L28,23 L23,28 L9,28 Z M9,14 L23,14 L28,9 M23,14 L23,28" fill="none" stroke="#80d0a0" stroke-width="1.5" stroke-linejoin="round"/></svg>
<svg style="left:49px;top:515px;" width="5" height="5" viewBox="0 0 5 5"><polygon points="5,0 5,5 0,5" fill="#9a9a9a" opacity="0.8"/></svg>
<div style="left:77.00px;top:133.95px;font-size:14px;line-height:14px;color:#f2f2f2;white-space:pre;will-change:transform;text-shadow:1px 1px 1px #000,0 0 2px #000;">Camera Perspective</div>
<div style="left:77.00px;top:155.95px;font-size:14px;line-height:14px;color:#f2f2f2;white-space:pre;will-change:transform;text-shadow:1px 1px 1px #000,0 0 2px #000;">(1) Collection | Cube</div>
<div style="left:77.00px;top:177.25px;font-size:14px;line-height:14px;color:#f2f2f2;white-space:pre;transform:scaleX(0.9909);transform-origin:left center;will-change:transform;text-shadow:1px 1px 1px #000,0 0 2px #000;">Time: 8s/10s | Samples/Sec 34.1 M | Rays/Sample 5.2 | RT Path GPU + Tile Path Sampler | 14 Tris</div>
<svg style="left:820px;top:125px;" width="110" height="110" viewBox="0 0 110 110">
<line x1="55" y1="55.8" x2="55" y2="23" stroke="#2f7dd6" stroke-width="2"/>
<line x1="55" y1="55.8" x2="72" y2="48.5" stroke="#6c9a2c" stroke-width="2"/>
<line x1="55" y1="55.8" x2="89" y2="59.6" stroke="#e0334b" stroke-width="2"/>
<circle cx="20.6" cy="52" r="8.6" fill="#5a3039" stroke="#d83a4e" stroke-width="1.3" opacity="0.85"/>
<circle cx="38.2" cy="63.3" r="9.6" fill="#4a5d2f" stroke="#8ed022" stroke-width="1.6"/>
<circle cx="55" cy="93.1" r="8.8" fill="#2e4f73" stroke="#3a86dc" stroke-width="1.3"/>
<circle cx="55" cy="18.5" r="9.6" fill="#2f7dd6"/>
<circle cx="72.2" cy="48.5" r="8.6" fill="#6c9a2c"/>
<circle cx="89.3" cy="59.6" r="9.6" fill="#e0334b"/>
<text x="55" y="23.2" font-family="Liberation Sans" font-weight="bold" font-size="13" text-anchor="middle" fill="#1a1a1a">Z</text>
<text x="72.2" y="53.2" font-family="Liberation Sans" font-weight="bold" font-size="13" text-anchor="middle" fill="#1a1a1a">Y</text>
<text x="89.3" y="64.3" font-family="Liberation Sans" font-weight="bold" font-size="13" text-anchor="middle" fill="#1a1a1a">X</text>
</svg>
<svg style="left:872px;top:318px;" width="64" height="36" viewBox="0 0 64 36"><line x1="0" y1="35" x2="63" y2="1.5" stroke="#3c5028" stroke-width="1"/></svg>
<svg style="left:891px;top:229px;" width="34" height="34" viewBox="0 0 34 34"><circle cx="16.5" cy="17" r="15.5" fill="#222222"/></svg>
<svg style="left:891px;top:265px;" width="34" height="34" viewBox="0 0 34 34"><circle cx="16.5" cy="17" r="15.5" fill="#222222"/></svg>
<svg style="left:891px;top:301px;" width="34" height="34" viewBox="0 0 34 34"><circle cx="16.5" cy="17" r="15.5" fill="#222222"/></svg>
<svg style="left:895px;top:234px;" width="26" height="26" viewBox="0 0 26 26">
<circle cx="14" cy="11" r="6.5" fill="#e0e0e0"/>
<path d="M14,7.5 V14.5 M10.5,11 H17.5" stroke="#232323" stroke-width="1.4"/>
<line x1="9" y1="16" x2="4" y2="21" stroke="#e0e0e0" stroke-width="2.4" stroke-linecap="round"/></svg>
<svg style="left:895px;top:269px;" width="26" height="26" viewBox="0 0 26 26">
<path d="M6,13 L6,16 C6,21 9,24 13,24 C18,24 20,21 21,17 L23,11 C23.5,9.5 21.5,9 21,10.5 L19.5,14 L19.5,5.5 C19.5,4 17.5,4 17.5,5.5 L17.5,12 L17,3.5 C17,2 15,2 15,3.5 L15,12 L14.5,4 C14.5,2.5 12.5,2.5 12.5,4 L12.5,12.5 L12,6 C12,4.5 10,4.5 10,6 L10,15 L8.5,12.5 C7.5,11 5.5,11.5 6,13 Z" fill="#e0e0e0"/></svg>
<svg style="left:895px;top:305px;" width="26" height="26" viewBox="0 0 26 26">
<circle cx="9" cy="8" r="4.5" fill="#e0e0e0"/><circle cx="17" cy="8" r="4.5" fill="#e0e0e0"/>
<circle cx="9" cy="8" r="1.3" fill="#555"/><circle cx="17" cy="8" r="1.3" fill="#555"/>
<rect x="5" y="13" width="14" height="8" rx="1" fill="#e0e0e0"/><polygon points="19,17 24,13 24,21" fill="#e0e0e0"/></svg>
<div style="left:938px;top:115px;width:450px;height:24px;background:#2b2b2b;"></div>
<div style="left:938px;top:163px;width:450px;height:24px;background:#2b2b2b;"></div>
<div style="left:938px;top:211px;width:450px;height:24px;background:#2b2b2b;"></div>
<div style="left:938px;top:259px;width:450px;height:24px;background:#2b2b2b;"></div>
<div style="left:938px;top:307px;width:450px;height:24px;background:#2b2b2b;"></div>
<div style="left:938px;top:355px;width:450px;height:13px;background:#2b2b2b;border-radius:0 0 6px 6px;"></div>
<div style="left:938px;top:163px;width:450px;height:24px;background:#334d80;"></div>
<div style="left:947px;top:63px;width:38px;height:23px;background:#282828;border-radius:5px;box-shadow:inset 0 0 0 1px #3b3b3b;"></div>
<svg style="left:952px;top:65px;" width="20" height="20" viewBox="0 0 20 20">
<rect x="2" y="2" width="6" height="3" fill="#e0e0e0"/>
<polyline points="4,5 4,15 8,15" fill="none" stroke="#a0a0a0" stroke-width="1.3"/><line x1="4" y1="9.5" x2="8" y2="9.5" stroke="#a0a0a0" stroke-width="1.3"/>
<rect x="9" y="8" width="9" height="3" fill="#e0e0e0"/><rect x="9" y="13.5" width="9" height="3" fill="#e0e0e0"/></svg>
<svg style="left:972.0px;top:72.25px;" width="10" height="6.5" viewBox="0 0 10 6.5"><polyline points="1,1 5.0,5.5 9,1" fill="none" stroke="#e0e0e0" stroke-width="1.4" stroke-linecap="round" stroke-linejoin="round"/></svg>
<div style="left:991px;top:63px;width:37px;height:23px;background:#282828;border-radius:5px;box-shadow:inset 0 0 0 1px #3b3b3b;"></div>
<svg style="left:995px;top:65px;" width="20" height="20" viewBox="0 0 20 20">
<rect x="2.5" y="6.5" width="10" height="10" fill="none" stroke="#a8a8a8" stroke-width="1.2"/>
<rect x="4.5" y="4.5" width="10" height="10" fill="#282828" stroke="#c8c8c8" stroke-width="1.2"/>
<rect x="6.5" y="2.5" width="10" height="10" fill="#282828" stroke="#e0e0e0" stroke-width="1.3"/>
<polygon points="7,12 10.5,6.5 13,9.5 14,8.5 16,12" fill="#e0e0e0"/><circle cx="13.8" cy="5.2" r="1" fill="#e0e0e0"/></svg>
<svg style="left:1015.0px;top:72.25px;" width="10" height="6.5" viewBox="0 0 10 6.5"><polyline points="1,1 5.0,5.5 9,1" fill="none" stroke="#e0e0e0" stroke-width="1.4" stroke-linecap="round" stroke-linejoin="round"/></svg>
<div style="left:1081px;top:63px;width:137px;height:23px;background:#1d1d1d;border-radius:5px;box-shadow:inset 0 0 0 1px #363636;"></div>
<svg style="left:1085px;top:65px;" width="20" height="20" viewBox="0 0 20 20">
<circle cx="11.5" cy="8" r="5" fill="none" stroke="#e0e0e0" stroke-width="1.4"/>
<line x1="8" y1="11.5" x2="3" y2="16.5" stroke="#e0e0e0" stroke-width="1.6" stroke-linecap="round"/></svg>
<div style="left:1313px;top:63px;width:37px;height:23px;background:#282828;border-radius:5px;box-shadow:inset 0 0 0 1px #3b3b3b;"></div>
<svg style="left:1314px;top:65px;" width="20" height="20" viewBox="0 0 20 20">
<path d="M2.5,3.5 L16.5,3.5 L11,10 L10.5,17 L9,17.5 L8.5,10 Z" fill="none" stroke="#e6e6e6" stroke-width="1.5" stroke-linejoin="round"/></svg>
<svg style="left:1337.0px;top:72.75px;" width="10" height="6.5" viewBox="0 0 10 6.5"><polyline points="1,1 5.0,5.5 9,1" fill="none" stroke="#e0e0e0" stroke-width="1.4" stroke-linecap="round" stroke-linejoin="round"/></svg>
<div style="left:1356px;top:63px;width:23px;height:23px;background:#545454;border-radius:5px;box-shadow:inset 0 0 0 1px #545454;"></div>
<svg style="left:1357px;top:65px;" width="22" height="20" viewBox="0 0 22 20">
<rect x="3" y="4" width="9" height="2.5" fill="#cfcfcf"/><rect x="4" y="8" width="12" height="9" fill="none" stroke="#cfcfcf" stroke-width="1.4"/>
<rect x="8" y="11" width="4" height="1.5" fill="#cfcfcf"/>
<circle cx="15.5" cy="5" r="4.2" fill="#545454" stroke="#e6e6e6" stroke-width="1.4"/><path d="M15.5,2.8 V7.2 M13.3,5 H17.7" stroke="#e6e6e6" stroke-width="1.3"/></svg>
<svg style="left:965px;top:95px;" width="18" height="18" viewBox="0 0 18 18">
<rect x="1.5" y="1.5" width="15" height="3.5" fill="#e0e0e0"/>
<rect x="2.5" y="6" width="13" height="10" fill="#e0e0e0"/>
<rect x="7" y="8" width="4" height="1.8" rx="0.8" fill="#282828"/></svg>
<div style="left:990.00px;top:97.15px;font-size:14px;line-height:14px;color:#d8d8d8;white-space:pre;will-change:transform;">Scene Collection</div>
<svg style="left:968px;top:123px;" width="10" height="10" viewBox="0 0 10 10"><polygon points="1,1.5 9,1.5 5,8.5" fill="#c8c8c8"/></svg>
<div style="left:986px;top:116px;width:23px;height:22px;background:#4a4a4a;border-radius:5px;box-shadow:inset 0 0 0 1px #5a5a5a;"></div>
<svg style="left:988.5px;top:118px;" width="18" height="18" viewBox="0 0 18 18">
<rect x="1.5" y="1.5" width="15" height="3.5" fill="#e0e0e0"/>
<rect x="2.5" y="6" width="13" height="10" fill="#e0e0e0"/>
<rect x="7" y="8" width="4" height="1.8" rx="0.8" fill="#4a4a4a"/></svg>
<div style="left:1014.30px;top:121.15px;font-size:14px;line-height:14px;color:#d8d8d8;white-space:pre;will-change:transform;">Collection</div>
<div style="left:973px;top:145px;width:1px;height:108px;background:#5a5a5a;"></div>
<svg style="left:993px;top:146px;" width="10" height="10" viewBox="0 0 10 10"><polygon points="1.5,1 8.5,5 1.5,9" fill="#c8c8c8"/></svg>
<svg style="left:1011px;top:141px;" width="20" height="20" viewBox="0 0 20 20">
<circle cx="6" cy="5.5" r="4.2" fill="#d4894d"/><circle cx="13.5" cy="5" r="4.5" fill="#d4894d"/>
<circle cx="6" cy="5.5" r="1" fill="#282828"/><circle cx="13.5" cy="5" r="1" fill="#282828"/>
<rect x="4" y="10" width="11" height="7" fill="#d4894d"/><polygon points="15,13.5 20,10 20,17.5" fill="#d4894d"/><rect x="1.5" y="12.5" width="2.5" height="2" fill="#d4894d"/></svg>
<div style="left:1038.30px;top:145.15px;font-size:14px;line-height:14px;color:#d8d8d8;white-space:pre;will-change:transform;">Camera</div>
<svg style="left:1332px;top:142px;" width="19" height="18" viewBox="0 0 19 18">
<path d="M1.5,9 C5,2.5 14,2.5 17.5,9 C14,15.5 5,15.5 1.5,9 Z" fill="#e6e6e6"/>
<circle cx="9.5" cy="9" r="3.6" fill="#282828"/><rect x="8" y="7.5" width="3" height="3" fill="#e6e6e6"/></svg>
<svg style="left:1356px;top:142px;" width="19" height="18" viewBox="0 0 19 18">
<path d="M2,5 L6,5 L7.5,2.5 L11.5,2.5 L13,5 L17,5 L17,16 L2,16 Z" fill="#e6e6e6"/>
<circle cx="9.5" cy="10.5" r="4.4" fill="#282828"/><circle cx="9.5" cy="10.5" r="3.4" fill="#e6e6e6"/><circle cx="9.5" cy="10.5" r="2.7" fill="#282828"/></svg>
<svg style="left:993px;top:170px;" width="10" height="10" viewBox="0 0 10 10"><polygon points="1.5,1 8.5,5 1.5,9" fill="#c8c8c8"/></svg>
<div style="left:1010px;top:164px;width:24px;height:22px;background:#5a6d94;border-radius:5px;box-shadow:inset 0 0 0 1px #6f81a6;"></div>
<svg style="left:1012px;top:165px;" width="20" height="20" viewBox="0 0 20 20"><polygon points="3.3,4 16.8,4 10,17.2" fill="none" stroke="#d4894d" stroke-width="3" stroke-linejoin="round"/></svg>
<div style="left:1038.30px;top:169.15px;font-size:14px;line-height:14px;color:#ffaf29;white-space:pre;will-change:transform;">Cube</div>
<svg style="left:1332px;top:166px;" width="19" height="18" viewBox="0 0 19 18">
<path d="M1.5,9 C5,2.5 14,2.5 17.5,9 C14,15.5 5,15.5 1.5,9 Z" fill="#e6e6e6"/>
<circle cx="9.5" cy="9" r="3.6" fill="#334d80"/><rect x="8" y="7.5" width="3" height="3" fill="#e6e6e6"/></svg>
<svg style="left:1356px;top:166px;" width="19" height="18" viewBox="0 0 19 18">
<path d="M2,5 L6,5 L7.5,2.5 L11.5,2.5 L13,5 L17,5 L17,16 L2,16 Z" fill="#e6e6e6"/>
<circle cx="9.5" cy="10.5" r="4.4" fill="#334d80"/><circle cx="9.5" cy="10.5" r="3.4" fill="#e6e6e6"/><circle cx="9.5" cy="10.5" r="2.7" fill="#334d80"/></svg>
<svg style="left:993px;top:194px;" width="10" height="10" viewBox="0 0 10 10"><polygon points="1.5,1 8.5,5 1.5,9" fill="#c8c8c8"/></svg>
<svg style="left:1012px;top:189px;" width="20" height="20" viewBox="0 0 20 20">
<circle cx="10" cy="8" r="6.7" fill="#d4894d"/><rect x="6.5" y="13" width="7" height="2.5" fill="#d4894d"/>
<rect x="6" y="16.2" width="8" height="1.3" fill="#d4894d"/><rect x="7.5" y="18.2" width="5" height="1.3" fill="#d4894d"/>
<path d="M7.3,8.5 L7.3,11 M12.7,8.5 L12.7,11 M7.3,9.3 L12.7,9.3" stroke="#282828" stroke-width="1.1"/></svg>
<div style="left:1038.30px;top:193.15px;font-size:14px;line-height:14px;color:#d8d8d8;white-space:pre;will-change:transform;">Hemi Sun</div>
<svg style="left:1332px;top:190px;" width="19" height="18" viewBox="0 0 19 18">
<path d="M1.5,9 C5,2.5 14,2.5 17.5,9 C14,15.5 5,15.5 1.5,9 Z" fill="#e6e6e6"/>
<circle cx="9.5" cy="9" r="3.6" fill="#282828"/><rect x="8" y="7.5" width="3" height="3" fill="#e6e6e6"/></svg>
<svg style="left:1356px;top:190px;" width="19" height="18" viewBox="0 0 19 18">
<path d="M2,5 L6,5 L7.5,2.5 L11.5,2.5 L13,5 L17,5 L17,16 L2,16 Z" fill="#e6e6e6"/>
<circle cx="9.5" cy="10.5" r="4.4" fill="#282828"/><circle cx="9.5" cy="10.5" r="3.4" fill="#e6e6e6"/><circle cx="9.5" cy="10.5" r="2.7" fill="#282828"/></svg>
<svg style="left:993px;top:218px;" width="10" height="10" viewBox="0 0 10 10"><polygon points="1.5,1 8.5,5 1.5,9" fill="#c8c8c8"/></svg>
<svg style="left:1012px;top:213px;" width="20" height="20" viewBox="0 0 20 20">
<circle cx="10" cy="8" r="6.7" fill="#d4894d"/><rect x="6.5" y="13" width="7" height="2.5" fill="#d4894d"/>
<rect x="6" y="16.2" width="8" height="1.3" fill="#d4894d"/><rect x="7.5" y="18.2" width="5" height="1.3" fill="#d4894d"/>
<path d="M7.3,8.5 L7.3,11 M12.7,8.5 L12.7,11 M7.3,9.3 L12.7,9.3" stroke="#282828" stroke-width="1.1"/></svg>
<div style="left:1038.30px;top:217.15px;font-size:14px;line-height:14px;color:#d8d8d8;white-space:pre;will-change:transform;">Light</div>
<svg style="left:1332px;top:214px;" width="19" height="18" viewBox="0 0 19 18">
<path d="M1.5,9 C5,2.5 14,2.5 17.5,9 C14,15.5 5,15.5 1.5,9 Z" fill="#e6e6e6"/>
<circle cx="9.5" cy="9" r="3.6" fill="#2b2b2b"/><rect x="8" y="7.5" width="3" height="3" fill="#e6e6e6"/></svg>
<svg style="left:1356px;top:214px;" width="19" height="18" viewBox="0 0 19 18">
<path d="M2,5 L6,5 L7.5,2.5 L11.5,2.5 L13,5 L17,5 L17,16 L2,16 Z" fill="#e6e6e6"/>
<circle cx="9.5" cy="10.5" r="4.4" fill="#2b2b2b"/><circle cx="9.5" cy="10.5" r="3.4" fill="#e6e6e6"/><circle cx="9.5" cy="10.5" r="2.7" fill="#2b2b2b"/></svg>
<svg style="left:993px;top:242px;" width="10" height="10" viewBox="0 0 10 10"><polygon points="1.5,1 8.5,5 1.5,9" fill="#c8c8c8"/></svg>
<svg style="left:1012px;top:237px;" width="20" height="20" viewBox="0 0 20 20"><polygon points="3.3,4 16.8,4 10,17.2" fill="none" stroke="#d4894d" stroke-width="3" stroke-linejoin="round"/></svg>
<div style="left:1038.30px;top:241.15px;font-size:14px;line-height:14px;color:#d8d8d8;white-space:pre;will-change:transform;">Plane</div>
<svg style="left:1332px;top:238px;" width="19" height="18" viewBox="0 0 19 18">
<path d="M1.5,9 C5,2.5 14,2.5 17.5,9 C14,15.5 5,15.5 1.5,9 Z" fill="#e6e6e6"/>
<circle cx="9.5" cy="9" r="3.6" fill="#282828"/><rect x="8" y="7.5" width="3" height="3" fill="#e6e6e6"/></svg>
<svg style="left:1356px;top:238px;" width="19" height="18" viewBox="0 0 19 18">
<path d="M2,5 L6,5 L7.5,2.5 L11.5,2.5 L13,5 L17,5 L17,16 L2,16 Z" fill="#e6e6e6"/>
<circle cx="9.5" cy="10.5" r="4.4" fill="#282828"/><circle cx="9.5" cy="10.5" r="3.4" fill="#e6e6e6"/><circle cx="9.5" cy="10.5" r="2.7" fill="#282828"/></svg>
<svg style="left:1311px;top:121px;" width="14" height="14" viewBox="0 0 14 14"><rect x="0.5" y="0.5" width="13" height="13" rx="2" fill="#e6e6e6"/><polyline points="3,7 6,10 11,3.5" fill="none" stroke="#222" stroke-width="1.8"/></svg>
<svg style="left:1332px;top:118px;" width="19" height="18" viewBox="0 0 19 18">
<path d="M1.5,9 C5,2.5 14,2.5 17.5,9 C14,15.5 5,15.5 1.5,9 Z" fill="#e6e6e6"/>
<circle cx="9.5" cy="9" r="3.6" fill="#2b2b2b"/><rect x="8" y="7.5" width="3" height="3" fill="#e6e6e6"/></svg>
<svg style="left:1356px;top:118px;" width="19" height="18" viewBox="0 0 19 18">
<path d="M2,5 L6,5 L7.5,2.5 L11.5,2.5 L13,5 L17,5 L17,16 L2,16 Z" fill="#e6e6e6"/>
<circle cx="9.5" cy="10.5" r="4.4" fill="#2b2b2b"/><circle cx="9.5" cy="10.5" r="3.4" fill="#e6e6e6"/><circle cx="9.5" cy="10.5" r="2.7" fill="#2b2b2b"/></svg>
<div style="left:1112px;top:140px;width:24px;height:22px;background:#555555;border-radius:5px;"></div>
<svg style="left:1114px;top:141px;" width="20" height="20" viewBox="0 0 20 20">
<g fill="none" stroke="#25c29c" stroke-width="1.3"><circle cx="6" cy="6" r="3.7"/><circle cx="13.5" cy="5.5" r="4"/>
<rect x="4" y="11" width="10" height="6"/><polygon points="14,14 18.5,11 18.5,17"/></g></svg>
<svg style="left:1098.5px;top:166px;" width="18" height="18" viewBox="0 0 18 18">
<polygon points="3,3 15,3 9,15" fill="none" stroke="#25c29c" stroke-width="1.4"/>
<rect x="1" y="1" width="4" height="4" fill="#2b2b2b" stroke="#25c29c" stroke-width="1.2"/>
<rect x="13" y="1" width="4" height="4" fill="#2b2b2b" stroke="#25c29c" stroke-width="1.2"/>
<rect x="7" y="13" width="4" height="4" fill="#2b2b2b" stroke="#25c29c" stroke-width="1.2"/></svg>
<svg style="left:1099.5px;top:238px;" width="18" height="18" viewBox="0 0 18 18">
<polygon points="3,3 15,3 9,15" fill="none" stroke="#25c29c" stroke-width="1.4"/>
<rect x="1" y="1" width="4" height="4" fill="#2b2b2b" stroke="#25c29c" stroke-width="1.2"/>
<rect x="13" y="1" width="4" height="4" fill="#2b2b2b" stroke="#25c29c" stroke-width="1.2"/>
<rect x="7" y="13" width="4" height="4" fill="#2b2b2b" stroke="#25c29c" stroke-width="1.2"/></svg>
<svg style="left:1125px;top:190px;" width="18" height="18" viewBox="0 0 18 18">
<circle cx="9" cy="9" r="4.3" fill="none" stroke="#25c29c" stroke-width="1.3"/>
<g stroke="#25c29c" stroke-width="1.2"><line x1="9" y1="0.5" x2="9" y2="3.5"/><line x1="9" y1="14.5" x2="9" y2="17.5"/>
<line x1="0.5" y1="9" x2="3.5" y2="9"/><line x1="14.5" y1="9" x2="17.5" y2="9"/>
<line x1="3" y1="3" x2="5" y2="5"/><line x1="13" y1="13" x2="15" y2="15"/><line x1="15" y1="3" x2="13" y2="5"/><line x1="5" y1="13" x2="3" y2="15"/></g></svg>
<svg style="left:1095px;top:213px;" width="18" height="20" viewBox="0 0 18 20">
<path d="M5,15.5 A7.2,7.2 0 1 1 13,15.5" fill="none" stroke="#25c29c" stroke-width="1.3"/>
<circle cx="9" cy="9" r="1.4" fill="none" stroke="#25c29c" stroke-width="1.1"/>
<line x1="9" y1="10.5" x2="9" y2="19" stroke="#25c29c" stroke-width="1.1" stroke-dasharray="2,1.3"/></svg>
<div style="left:938px;top:401px;width:33px;height:624px;background:#1d1d1d;border-radius:0 0 0 6px;"></div>
<div style="left:941px;top:444px;width:30px;height:1px;background:#191919;"></div>
<div style="left:941px;top:617px;width:30px;height:1px;background:#191919;"></div>
<div style="left:941px;top:660px;width:30px;height:1px;background:#191919;"></div>
<div style="left:941px;top:899px;width:30px;height:1px;background:#191919;"></div>
<div style="left:941px;top:941px;width:30px;height:1px;background:#191919;"></div>
<div style="left:940px;top:453px;width:31px;height:31px;background:#303030;border-radius:6px 0 0 6px;"></div>
<svg style="left:945.0px;top:416.0px;" width="20" height="20" viewBox="0 0 20 20">
<line x1="5" y1="2" x2="5" y2="10" stroke="#d8d8d8" stroke-width="1.5"/><circle cx="5" cy="14" r="3.5" fill="#d8d8d8"/>
<path d="M11.5,3 A4,4 0 0 0 13,9 L13,17.5 A1.3,1.3 0 0 0 15.6,17.5 L15.6,9 A4,4 0 0 0 17,3 L16,6 L12.7,6 Z" fill="#d8d8d8"/></svg>
<svg style="left:945.0px;top:458.0px;" width="20" height="20" viewBox="0 0 20 20">
<rect x="2" y="5" width="16" height="12" rx="1.5" fill="#e0e0e0"/><rect x="6" y="2.5" width="6" height="3" fill="#e0e0e0"/><rect x="14" y="2.5" width="3" height="1.5" fill="#e0e0e0"/>
<rect x="4" y="8" width="9" height="1" fill="#303030"/><rect x="4" y="10.5" width="9" height="1" fill="#303030"/><rect x="4" y="13" width="9" height="1" fill="#303030"/>
<circle cx="15.5" cy="9.5" r="0.9" fill="#303030"/><circle cx="15.5" cy="13.5" r="0.9" fill="#303030"/></svg>
<svg style="left:945.0px;top:490.0px;" width="20" height="20" viewBox="0 0 20 20">
<rect x="2" y="3" width="16" height="6" rx="2" fill="#d8d8d8"/><rect x="4.5" y="7" width="11" height="11" fill="#8a8a8a"/>
<polygon points="6,16 9,11 11,13.5 12,12.5 14,16" fill="#303030"/></svg>
<svg style="left:945.0px;top:524.0px;" width="20" height="20" viewBox="0 0 20 20">
<rect x="2.5" y="7.5" width="10" height="10" fill="none" stroke="#a8a8a8" stroke-width="1.2"/>
<rect x="4.5" y="5.5" width="10" height="10" fill="#1d1d1d" stroke="#c8c8c8" stroke-width="1.2"/>
<rect x="6.5" y="3.5" width="11" height="11" fill="#1d1d1d" stroke="#e0e0e0" stroke-width="1.3"/>
<polygon points="7.5,13.5 11,7.5 13.5,10.5 14.5,9.5 17,13.5" fill="#e0e0e0"/><circle cx="15" cy="6" r="1" fill="#e0e0e0"/></svg>
<svg style="left:945.0px;top:557.0px;" width="20" height="20" viewBox="0 0 20 20">
<path d="M7,3 L11,12 A4,4 0 0 1 3,12 Z" fill="#c8c8c8"/><circle cx="15" cy="5" r="2.5" fill="#d8d8d8"/>
<circle cx="12.5" cy="13" r="4.5" fill="#1d1d1d" stroke="#e0e0e0" stroke-width="1.4"/></svg>
<svg style="left:945.0px;top:590.0px;" width="20" height="20" viewBox="0 0 20 20">
<circle cx="10" cy="10" r="6.8" fill="none" stroke="#c05060" stroke-width="1.7"/>
<path d="M5,8 C6.5,6 8,8.5 9.5,7.5 C11,6.5 10,4 12.5,4.2 L14.5,6 C13,7.5 14,9 12,10 C10.5,11 12,13.5 10.5,14.5 C9,15 8.5,12 7,11.5 C5.5,11 5,9.5 5,8 Z" fill="#c05060"/>
<line x1="2.5" y1="17.5" x2="17.5" y2="2.5" stroke="#c05060" stroke-width="1.4"/></svg>
<svg style="left:945.0px;top:633.0px;" width="20" height="20" viewBox="0 0 20 20">
<rect x="2.5" y="2.5" width="15" height="3" fill="#e0e0e0"/><rect x="3.5" y="6.5" width="13" height="10" fill="none" stroke="#e0e0e0" stroke-width="1.5"/>
<rect x="8" y="9" width="4" height="1.6" fill="#e0e0e0"/></svg>
<svg style="left:945.0px;top:674.0px;" width="20" height="20" viewBox="0 0 20 20">
<g stroke="#c88850" stroke-width="1.4" fill="none"><polyline points="2,6 2,2 6,2"/><polyline points="14,2 18,2 18,6"/><polyline points="18,14 18,18 14,18"/><polyline points="6,18 2,18 2,14"/></g>
<rect x="4.5" y="4.5" width="11" height="11" fill="#d08a50"/></svg>
<svg style="left:945.0px;top:707.0px;" width="20" height="20" viewBox="0 0 20 20">
<path d="M16.5,2.5 A4.5,4.5 0 0 0 11,8.5 L3,16.5 A1.6,1.6 0 0 0 5,18.5 L13,10.5 A4.5,4.5 0 0 0 18.5,4.5 L16,7 L14,6 L13.5,4 Z" fill="#6a9ce0"/></svg>
<svg style="left:945.0px;top:740.0px;" width="20" height="20" viewBox="0 0 20 20">
<circle cx="4" cy="4" r="2.5" fill="#6a9ce0"/><circle cx="16" cy="4" r="2" fill="#6a9ce0"/><circle cx="4" cy="16" r="2" fill="#6a9ce0"/><circle cx="16" cy="16" r="2.5" fill="#6a9ce0"/>
<g stroke="#6a9ce0" stroke-width="1.4"><line x1="4" y1="4" x2="16" y2="4"/><line x1="4" y1="4" x2="4" y2="16"/><line x1="4" y1="4" x2="16" y2="16"/></g></svg>
<svg style="left:945.0px;top:773.0px;" width="20" height="20" viewBox="0 0 20 20">
<circle cx="9.5" cy="10.5" r="6.5" fill="none" stroke="#6a9ce0" stroke-width="1.6"/><circle cx="9.5" cy="10.5" r="2.5" fill="#6a9ce0"/><circle cx="16" cy="4" r="2.5" fill="#6a9ce0"/></svg>
<svg style="left:945.0px;top:806.0px;" width="20" height="20" viewBox="0 0 20 20">
<path d="M14,2.5 A4,4 0 0 1 17.5,6 L6,17.5 A4,4 0 0 1 2.5,14 Z" fill="none" stroke="#6a9ce0" stroke-width="1.7"/>
<circle cx="8.5" cy="11.5" r="2.6" fill="none" stroke="#6a9ce0" stroke-width="1.5"/><circle cx="14" cy="6" r="1.3" fill="#6a9ce0"/></svg>
<svg style="left:945.0px;top:839.0px;" width="20" height="20" viewBox="0 0 20 20">
<polygon points="4,4 16,4 10,16" fill="none" stroke="#25c29c" stroke-width="1.5"/>
<rect x="1.5" y="1.5" width="5" height="5" fill="#1d1d1d" stroke="#25c29c" stroke-width="1.3"/>
<rect x="13.5" y="1.5" width="5" height="5" fill="#1d1d1d" stroke="#25c29c" stroke-width="1.3"/>
<rect x="7.5" y="13.5" width="5" height="5" fill="#1d1d1d" stroke="#25c29c" stroke-width="1.3"/></svg>
<svg style="left:945.0px;top:872.0px;" width="20" height="20" viewBox="0 0 20 20">
<circle cx="10" cy="10" r="8" fill="#c05060"/><path d="M10,2 A8,8 0 0 1 18,10 L10,10 Z" fill="#1d1d1d"/><path d="M10,10 L2,10 A8,8 0 0 0 10,18 Z" fill="#1d1d1d"/>
<circle cx="10" cy="10" r="8" fill="none" stroke="#c05060" stroke-width="1.3"/></svg>
<svg style="left:945.0px;top:914.0px;" width="20" height="20" viewBox="0 0 20 20"><rect x="2" y="2" width="4" height="4" fill="#c05060"/><rect x="2" y="10" width="4" height="4" fill="#c05060"/><rect x="6" y="6" width="4" height="4" fill="#c05060"/><rect x="6" y="14" width="4" height="4" fill="#c05060"/><rect x="10" y="2" width="4" height="4" fill="#c05060"/><rect x="10" y="10" width="4" height="4" fill="#c05060"/><rect x="14" y="6" width="4" height="4" fill="#c05060"/><rect x="14" y="14" width="4" height="4" fill="#c05060"/><rect x="2" y="2" width="16" height="16" fill="none" stroke="#c05060" stroke-width="1"/></svg>
<div style="left:980px;top:401px;width:398px;height:80px;background:#3d3d3d;border-radius:0 0 6px 6px;"></div>
<div style="left:1147px;top:392px;width:221px;height:22px;background:#333333;border-radius:4px;"></div>
<div style="left:1156.00px;top:395.65px;font-size:14px;line-height:14px;color:#8a8a8a;white-space:pre;will-change:transform;">Auto-Scale to MipMaps</div>
<svg style="left:1355.5px;top:400.25px;" width="10" height="6.5" viewBox="0 0 10 6.5"><polyline points="1,1 5.0,5.5 9,1" fill="none" stroke="#6a6a6a" stroke-width="1.3" stroke-linecap="round" stroke-linejoin="round"/></svg>
<div style="left:935.70px;top:395.65px;width:200px;text-align:right;font-size:14px;line-height:14px;color:#8c8c8c;white-space:pre;will-change:transform;">Type</div>
<div style="left:1147px;top:421px;width:221px;height:22px;background:#4b5f82;border-radius:4px;"></div>
<div style="left:1147.50px;top:424.65px;width:220px;text-align:center;font-size:14px;line-height:14px;color:#a8acb3;white-space:pre;will-change:transform;">100.0%</div>
<div style="left:935.70px;top:424.65px;width:200px;text-align:right;font-size:14px;line-height:14px;color:#8c8c8c;white-space:pre;will-change:transform;">Scale</div>
<div style="left:1147px;top:450px;width:221px;height:22px;background:#4b4b4b;border-radius:4px;"></div>
<div style="left:1147.50px;top:453.65px;width:220px;text-align:center;font-size:14px;line-height:14px;color:#a0a0a0;white-space:pre;will-change:transform;">64</div>
<div style="left:935.70px;top:453.65px;width:200px;text-align:right;font-size:14px;line-height:14px;color:#8c8c8c;white-space:pre;will-change:transform;">Min. Size (Pixels)</div>
<div style="left:938px;top:371px;width:450px;height:30px;background:#303030;border-radius:6px 6px 0 0;"></div>
<div style="left:938px;top:371px;width:450px;height:30px;background:#303030;border-radius:6px 6px 0 0;"></div>
<div style="left:947px;top:374px;width:37px;height:24px;background:#282828;border-radius:5px;box-shadow:inset 0 0 0 1px #3b3b3b;"></div>
<svg style="left:952px;top:377px;" width="22" height="20" viewBox="0 0 22 20">
<rect x="1.5" y="2" width="15" height="7" rx="3.5" fill="#e6e6e6"/><rect x="8" y="3.3" width="6.5" height="4.4" fill="#282828"/>
<rect x="1.5" y="11" width="15" height="7" rx="3.5" fill="#e6e6e6"/><rect x="11" y="12.3" width="3.5" height="4.4" fill="#282828"/></svg>
<svg style="left:971.0px;top:383.25px;" width="10" height="6.5" viewBox="0 0 10 6.5"><polyline points="1,1 5.0,5.5 9,1" fill="none" stroke="#e0e0e0" stroke-width="1.4" stroke-linecap="round" stroke-linejoin="round"/></svg>
<div style="left:1095px;top:375px;width:138px;height:23px;background:#1d1d1d;border-radius:5px;box-shadow:inset 0 0 0 1px #363636;"></div>
<svg style="left:1100px;top:377px;" width="20" height="20" viewBox="0 0 20 20">
<circle cx="11.5" cy="8" r="5" fill="none" stroke="#e0e0e0" stroke-width="1.4"/>
<line x1="8" y1="11.5" x2="3" y2="16.5" stroke="#e0e0e0" stroke-width="1.6" stroke-linecap="round"/></svg>
<div style="left:1356px;top:375px;width:22px;height:23px;background:#282828;border-radius:5px;box-shadow:inset 0 0 0 1px #3b3b3b;"></div>
<svg style="left:1362.0px;top:383.25px;" width="10" height="6.5" viewBox="0 0 10 6.5"><polyline points="1,1 5.0,5.5 9,1" fill="none" stroke="#ffffff" stroke-width="1.6" stroke-linecap="round" stroke-linejoin="round"/></svg>
<div style="left:980px;top:484px;width:398px;height:119px;background:#3d3d3d;border-radius:6px;"></div>
<svg style="left:989.0px;top:494.75px;" width="12" height="7.5" viewBox="0 0 12 7.5"><polyline points="1,1 6.0,6.5 11,1" fill="none" stroke="#c8c8c8" stroke-width="1.3" stroke-linecap="round" stroke-linejoin="round"/></svg>
<svg style="left:1007px;top:491.5px;" width="18" height="16" viewBox="0 0 18 16">
<g fill="#ff6a10">
<circle cx="13.9" cy="7.3" r="3.1"/><circle cx="10.7" cy="3.8" r="2.2"/><circle cx="10.7" cy="11" r="2.2"/>
<circle cx="7.6" cy="0.9" r="1.2"/><circle cx="4.1" cy="4.1" r="1.1"/><circle cx="7.6" cy="7.4" r="1.2"/>
<circle cx="0.8" cy="7.4" r="0.9"/><circle cx="4.1" cy="10.7" r="1.1"/><circle cx="7.6" cy="14.2" r="1.2"/></g></svg>
<div style="left:1030.30px;top:492.15px;font-size:14px;line-height:14px;color:#e6e6e6;white-space:pre;will-change:transform;">Caches</div>
<svg style="left:1355px;top:495px;" width="17" height="9" viewBox="0 0 17 9"><rect x="1" y="1" width="2" height="2" fill="#b0b0b0"/><rect x="1" y="3" width="2" height="1" fill="#000"/><rect x="1" y="5" width="2" height="2" fill="#b0b0b0"/><rect x="1" y="7" width="2" height="1" fill="#000"/><rect x="5" y="1" width="2" height="2" fill="#b0b0b0"/><rect x="5" y="3" width="2" height="1" fill="#000"/><rect x="5" y="5" width="2" height="2" fill="#b0b0b0"/><rect x="5" y="7" width="2" height="1" fill="#000"/><rect x="9" y="1" width="2" height="2" fill="#b0b0b0"/><rect x="9" y="3" width="2" height="1" fill="#000"/><rect x="9" y="5" width="2" height="2" fill="#b0b0b0"/><rect x="9" y="7" width="2" height="1" fill="#000"/><rect x="13" y="1" width="2" height="2" fill="#b0b0b0"/><rect x="13" y="3" width="2" height="1" fill="#000"/><rect x="13" y="5" width="2" height="2" fill="#b0b0b0"/><rect x="13" y="7" width="2" height="1" fill="#000"/></svg>
<svg style="left:1008.5px;top:523.0px;" width="7" height="12" viewBox="0 0 7 12"><polyline points="1,1 6,6.0 1,11" fill="none" stroke="#c8c8c8" stroke-width="1.3" stroke-linecap="round" stroke-linejoin="round"/></svg>
<div style="left:1021px;top:521px;width:16px;height:16px;background:#4772b3;border-radius:3px;"></div>
<svg style="left:1021px;top:521px;" width="16" height="16" viewBox="0 0 16 16"><polyline points="3.5,8.5 6.5,11.5 12.5,4.5" fill="none" stroke="#fff" stroke-width="2" stroke-linecap="round" stroke-linejoin="round"/></svg>
<div style="left:1040.30px;top:522.15px;font-size:14px;line-height:14px;color:#e6e6e6;white-space:pre;will-change:transform;">PhotonGI Cache</div>
<svg style="left:1008.5px;top:553.0px;" width="7" height="12" viewBox="0 0 7 12"><polyline points="1,1 6,6.0 1,11" fill="none" stroke="#c8c8c8" stroke-width="1.3" stroke-linecap="round" stroke-linejoin="round"/></svg>
<div style="left:1021px;top:551px;width:16px;height:16px;background:#4772b3;border-radius:3px;"></div>
<svg style="left:1021px;top:551px;" width="16" height="16" viewBox="0 0 16 16"><polyline points="3.5,8.5 6.5,11.5 12.5,4.5" fill="none" stroke="#fff" stroke-width="2" stroke-linecap="round" stroke-linejoin="round"/></svg>
<div style="left:1040.30px;top:552.15px;font-size:14px;line-height:14px;color:#e6e6e6;white-space:pre;will-change:transform;">Environment Light Cache</div>
<svg style="left:1008.5px;top:583.0px;" width="7" height="12" viewBox="0 0 7 12"><polyline points="1,1 6,6.0 1,11" fill="none" stroke="#c8c8c8" stroke-width="1.3" stroke-linecap="round" stroke-linejoin="round"/></svg>
<div style="left:1021px;top:581px;width:16px;height:16px;background:#4772b3;border-radius:3px;"></div>
<svg style="left:1021px;top:581px;" width="16" height="16" viewBox="0 0 16 16"><polyline points="3.5,8.5 6.5,11.5 12.5,4.5" fill="none" stroke="#fff" stroke-width="2" stroke-linecap="round" stroke-linejoin="round"/></svg>
<div style="left:1040.30px;top:582.15px;font-size:14px;line-height:14px;color:#e6e6e6;white-space:pre;will-change:transform;">Direct Light Sampling Cache</div>
<div style="left:980px;top:606px;width:398px;height:30px;background:#3d3d3d;border-radius:6px;"></div>
<svg style="left:991.25px;top:615.0px;" width="7.5" height="12" viewBox="0 0 7.5 12"><polyline points="1,1 6.5,6.0 1,11" fill="none" stroke="#c8c8c8" stroke-width="1.3" stroke-linecap="round" stroke-linejoin="round"/></svg>
<svg style="left:1007px;top:613.5px;" width="18" height="16" viewBox="0 0 18 16">
<g fill="#ff6a10">
<circle cx="13.9" cy="7.3" r="3.1"/><circle cx="10.7" cy="3.8" r="2.2"/><circle cx="10.7" cy="11" r="2.2"/>
<circle cx="7.6" cy="0.9" r="1.2"/><circle cx="4.1" cy="4.1" r="1.1"/><circle cx="7.6" cy="7.4" r="1.2"/>
<circle cx="0.8" cy="7.4" r="0.9"/><circle cx="4.1" cy="10.7" r="1.1"/><circle cx="7.6" cy="14.2" r="1.2"/></g></svg>
<div style="left:1030.30px;top:614.15px;font-size:14px;line-height:14px;color:#e6e6e6;white-space:pre;will-change:transform;">Devices</div>
<svg style="left:1355px;top:617px;" width="17" height="9" viewBox="0 0 17 9"><rect x="1" y="1" width="2" height="2" fill="#b0b0b0"/><rect x="1" y="3" width="2" height="1" fill="#000"/><rect x="1" y="5" width="2" height="2" fill="#b0b0b0"/><rect x="1" y="7" width="2" height="1" fill="#000"/><rect x="5" y="1" width="2" height="2" fill="#b0b0b0"/><rect x="5" y="3" width="2" height="1" fill="#000"/><rect x="5" y="5" width="2" height="2" fill="#b0b0b0"/><rect x="5" y="7" width="2" height="1" fill="#000"/><rect x="9" y="1" width="2" height="2" fill="#b0b0b0"/><rect x="9" y="3" width="2" height="1" fill="#000"/><rect x="9" y="5" width="2" height="2" fill="#b0b0b0"/><rect x="9" y="7" width="2" height="1" fill="#000"/><rect x="13" y="1" width="2" height="2" fill="#b0b0b0"/><rect x="13" y="3" width="2" height="1" fill="#000"/><rect x="13" y="5" width="2" height="2" fill="#b0b0b0"/><rect x="13" y="7" width="2" height="1" fill="#000"/></svg>
<div style="left:980px;top:638px;width:398px;height:30px;background:#3d3d3d;border-radius:6px;"></div>
<svg style="left:991.25px;top:647.0px;" width="7.5" height="12" viewBox="0 0 7.5 12"><polyline points="1,1 6.5,6.0 1,11" fill="none" stroke="#c8c8c8" stroke-width="1.3" stroke-linecap="round" stroke-linejoin="round"/></svg>
<div style="left:1006.00px;top:646.15px;font-size:14px;line-height:14px;color:#e6e6e6;white-space:pre;will-change:transform;">Color Management</div>
<svg style="left:1355px;top:649px;" width="17" height="9" viewBox="0 0 17 9"><rect x="1" y="1" width="2" height="2" fill="#b0b0b0"/><rect x="1" y="3" width="2" height="1" fill="#000"/><rect x="1" y="5" width="2" height="2" fill="#b0b0b0"/><rect x="1" y="7" width="2" height="1" fill="#000"/><rect x="5" y="1" width="2" height="2" fill="#b0b0b0"/><rect x="5" y="3" width="2" height="1" fill="#000"/><rect x="5" y="5" width="2" height="2" fill="#b0b0b0"/><rect x="5" y="7" width="2" height="1" fill="#000"/><rect x="9" y="1" width="2" height="2" fill="#b0b0b0"/><rect x="9" y="3" width="2" height="1" fill="#000"/><rect x="9" y="5" width="2" height="2" fill="#b0b0b0"/><rect x="9" y="7" width="2" height="1" fill="#000"/><rect x="13" y="1" width="2" height="2" fill="#b0b0b0"/><rect x="13" y="3" width="2" height="1" fill="#000"/><rect x="13" y="5" width="2" height="2" fill="#b0b0b0"/><rect x="13" y="7" width="2" height="1" fill="#000"/></svg>
<div style="left:980px;top:670px;width:398px;height:289px;background:#3d3d3d;border-radius:6px;"></div>
<div style="left:980px;top:831px;width:398px;height:128px;background:#383838;border-radius:0 0 6px 6px;"></div>
<svg style="left:989.0px;top:680.75px;" width="12" height="7.5" viewBox="0 0 12 7.5"><polyline points="1,1 6.0,6.5 11,1" fill="none" stroke="#c8c8c8" stroke-width="1.3" stroke-linecap="round" stroke-linejoin="round"/></svg>
<svg style="left:1007px;top:677.5px;" width="18" height="16" viewBox="0 0 18 16">
<g fill="#ff6a10">
<circle cx="13.9" cy="7.3" r="3.1"/><circle cx="10.7" cy="3.8" r="2.2"/><circle cx="10.7" cy="11" r="2.2"/>
<circle cx="7.6" cy="0.9" r="1.2"/><circle cx="4.1" cy="4.1" r="1.1"/><circle cx="7.6" cy="7.4" r="1.2"/>
<circle cx="0.8" cy="7.4" r="0.9"/><circle cx="4.1" cy="10.7" r="1.1"/><circle cx="7.6" cy="14.2" r="1.2"/></g></svg>
<div style="left:1030.30px;top:678.15px;font-size:14px;line-height:14px;color:#e6e6e6;white-space:pre;will-change:transform;">Viewport Render</div>
<svg style="left:1355px;top:681px;" width="17" height="9" viewBox="0 0 17 9"><rect x="1" y="1" width="2" height="2" fill="#b0b0b0"/><rect x="1" y="3" width="2" height="1" fill="#000"/><rect x="1" y="5" width="2" height="2" fill="#b0b0b0"/><rect x="1" y="7" width="2" height="1" fill="#000"/><rect x="5" y="1" width="2" height="2" fill="#b0b0b0"/><rect x="5" y="3" width="2" height="1" fill="#000"/><rect x="5" y="5" width="2" height="2" fill="#b0b0b0"/><rect x="5" y="7" width="2" height="1" fill="#000"/><rect x="9" y="1" width="2" height="2" fill="#b0b0b0"/><rect x="9" y="3" width="2" height="1" fill="#000"/><rect x="9" y="5" width="2" height="2" fill="#b0b0b0"/><rect x="9" y="7" width="2" height="1" fill="#000"/><rect x="13" y="1" width="2" height="2" fill="#b0b0b0"/><rect x="13" y="3" width="2" height="1" fill="#000"/><rect x="13" y="5" width="2" height="2" fill="#b0b0b0"/><rect x="13" y="7" width="2" height="1" fill="#000"/></svg>
<div style="left:1147px;top:710px;width:221px;height:22px;background:#282828;border-radius:4px;"></div>
<div style="left:1156.00px;top:713.65px;font-size:14px;line-height:14px;color:#e6e6e6;white-space:pre;will-change:transform;">GPU</div>
<svg style="left:1355.5px;top:718.25px;" width="10" height="6.5" viewBox="0 0 10 6.5"><polyline points="1,1 5.0,5.5 9,1" fill="none" stroke="#e0e0e0" stroke-width="1.3" stroke-linecap="round" stroke-linejoin="round"/></svg>
<div style="left:935.70px;top:713.65px;width:200px;text-align:right;font-size:14px;line-height:14px;color:#d0d0d0;white-space:pre;will-change:transform;">Device</div>
<div style="left:1147px;top:739px;width:221px;height:22px;background:#545454;border-radius:4px;"></div>
<div style="left:1147.50px;top:742.65px;width:220px;text-align:center;font-size:14px;line-height:14px;color:#e6e6e6;white-space:pre;will-change:transform;">10</div>
<div style="left:935.70px;top:742.65px;width:200px;text-align:right;font-size:14px;line-height:14px;color:#d0d0d0;white-space:pre;will-change:transform;">Halt Time (s)</div>
<svg style="left:1008.5px;top:780.0px;" width="7" height="12" viewBox="0 0 7 12"><polyline points="1,1 6,6.0 1,11" fill="none" stroke="#c8c8c8" stroke-width="1.3" stroke-linecap="round" stroke-linejoin="round"/></svg>
<div style="left:1021px;top:778px;width:16px;height:16px;background:#545454;border-radius:3px;"></div>
<div style="left:1040.20px;top:779.15px;font-size:14px;line-height:14px;color:#e6e6e6;white-space:pre;will-change:transform;">Denoiser</div>
<svg style="left:1005.0px;top:812.25px;" width="12" height="7.5" viewBox="0 0 12 7.5"><polyline points="1,1 6.0,6.5 11,1" fill="none" stroke="#c8c8c8" stroke-width="1.3" stroke-linecap="round" stroke-linejoin="round"/></svg>
<div style="left:1022.30px;top:809.15px;font-size:14px;line-height:14px;color:#e6e6e6;white-space:pre;will-change:transform;">Advanced</div>
<div style="left:1147px;top:844px;width:16px;height:16px;background:#4772b3;border-radius:3px;"></div>
<svg style="left:1147px;top:844px;" width="16" height="16" viewBox="0 0 16 16"><polyline points="3.5,8.5 6.5,11.5 12.5,4.5" fill="none" stroke="#fff" stroke-width="2" stroke-linecap="round" stroke-linejoin="round"/></svg>
<div style="left:1167.00px;top:845.15px;font-size:14px;line-height:14px;color:#e6e6e6;white-space:pre;will-change:transform;">Reduce first sample resolution</div>
<div style="left:1147px;top:870px;width:221px;height:22px;background:#545454;border-radius:4px;"></div>
<div style="left:1147.50px;top:873.65px;width:220px;text-align:center;font-size:14px;line-height:14px;color:#e6e6e6;white-space:pre;will-change:transform;">4</div>
<div style="left:935.70px;top:873.65px;width:200px;text-align:right;font-size:14px;line-height:14px;color:#d0d0d0;white-space:pre;will-change:transform;">Block Size</div>
<div style="left:1147px;top:899px;width:221px;height:22px;background:#282828;border-radius:4px;"></div>
<div style="left:1156.00px;top:902.65px;font-size:14px;line-height:14px;color:#e6e6e6;white-space:pre;will-change:transform;">2x</div>
<svg style="left:1355.5px;top:907.25px;" width="10" height="6.5" viewBox="0 0 10 6.5"><polyline points="1,1 5.0,5.5 9,1" fill="none" stroke="#e0e0e0" stroke-width="1.3" stroke-linecap="round" stroke-linejoin="round"/></svg>
<div style="left:935.70px;top:902.65px;width:200px;text-align:right;font-size:14px;line-height:14px;color:#d0d0d0;white-space:pre;will-change:transform;">Pixel Size</div>
<div style="left:1147px;top:928px;width:221px;height:22px;background:#282828;border-radius:4px;"></div>
<div style="left:1156.00px;top:931.65px;font-size:14px;line-height:14px;color:#e6e6e6;white-space:pre;will-change:transform;">Nearest (blocky)</div>
<svg style="left:1355.5px;top:936.25px;" width="10" height="6.5" viewBox="0 0 10 6.5"><polyline points="1,1 5.0,5.5 9,1" fill="none" stroke="#e0e0e0" stroke-width="1.3" stroke-linecap="round" stroke-linejoin="round"/></svg>
<div style="left:935.70px;top:931.65px;width:200px;text-align:right;font-size:14px;line-height:14px;color:#d0d0d0;white-space:pre;will-change:transform;">Filter</div>
<div style="left:980px;top:962px;width:398px;height:30px;background:#3d3d3d;border-radius:6px;"></div>
<svg style="left:989.0px;top:972.75px;" width="12" height="7.5" viewBox="0 0 12 7.5"><polyline points="1,1 6.0,6.5 11,1" fill="none" stroke="#c8c8c8" stroke-width="1.3" stroke-linecap="round" stroke-linejoin="round"/></svg>
<svg style="left:1007px;top:969.5px;" width="18" height="16" viewBox="0 0 18 16">
<g fill="#ff6a10">
<circle cx="13.9" cy="7.3" r="3.1"/><circle cx="10.7" cy="3.8" r="2.2"/><circle cx="10.7" cy="11" r="2.2"/>
<circle cx="7.6" cy="0.9" r="1.2"/><circle cx="4.1" cy="4.1" r="1.1"/><circle cx="7.6" cy="7.4" r="1.2"/>
<circle cx="0.8" cy="7.4" r="0.9"/><circle cx="4.1" cy="10.7" r="1.1"/><circle cx="7.6" cy="14.2" r="1.2"/></g></svg>
<div style="left:1035.30px;top:970.15px;font-size:14px;line-height:14px;color:#e6e6e6;white-space:pre;will-change:transform;">Error Log</div>
<svg style="left:1355px;top:973px;" width="17" height="9" viewBox="0 0 17 9"><rect x="1" y="1" width="2" height="2" fill="#b0b0b0"/><rect x="1" y="3" width="2" height="1" fill="#000"/><rect x="1" y="5" width="2" height="2" fill="#b0b0b0"/><rect x="1" y="7" width="2" height="1" fill="#000"/><rect x="5" y="1" width="2" height="2" fill="#b0b0b0"/><rect x="5" y="3" width="2" height="1" fill="#000"/><rect x="5" y="5" width="2" height="2" fill="#b0b0b0"/><rect x="5" y="7" width="2" height="1" fill="#000"/><rect x="9" y="1" width="2" height="2" fill="#b0b0b0"/><rect x="9" y="3" width="2" height="1" fill="#000"/><rect x="9" y="5" width="2" height="2" fill="#b0b0b0"/><rect x="9" y="7" width="2" height="1" fill="#000"/><rect x="13" y="1" width="2" height="2" fill="#b0b0b0"/><rect x="13" y="3" width="2" height="1" fill="#000"/><rect x="13" y="5" width="2" height="2" fill="#b0b0b0"/><rect x="13" y="7" width="2" height="1" fill="#000"/></svg>
<div style="left:980px;top:994.6px;width:398px;height:29.399999999999977px;background:#3d3d3d;border-radius:6px;"></div>
<svg style="left:991.25px;top:1003.6px;" width="7.5" height="12" viewBox="0 0 7.5 12"><polyline points="1,1 6.5,6.0 1,11" fill="none" stroke="#c8c8c8" stroke-width="1.3" stroke-linecap="round" stroke-linejoin="round"/></svg>
<svg style="left:1007px;top:1002.1px;" width="18" height="16" viewBox="0 0 18 16">
<g fill="#ff6a10">
<circle cx="13.9" cy="7.3" r="3.1"/><circle cx="10.7" cy="3.8" r="2.2"/><circle cx="10.7" cy="11" r="2.2"/>
<circle cx="7.6" cy="0.9" r="1.2"/><circle cx="4.1" cy="4.1" r="1.1"/><circle cx="7.6" cy="7.4" r="1.2"/>
<circle cx="0.8" cy="7.4" r="0.9"/><circle cx="4.1" cy="10.7" r="1.1"/><circle cx="7.6" cy="14.2" r="1.2"/></g></svg>
<div style="left:1030.30px;top:1002.75px;font-size:14px;line-height:14px;color:#e6e6e6;white-space:pre;will-change:transform;">LuxCore Tools</div>
<svg style="left:1355px;top:1005.6px;" width="17" height="9" viewBox="0 0 17 9"><rect x="1" y="1" width="2" height="2" fill="#b0b0b0"/><rect x="1" y="3" width="2" height="1" fill="#000"/><rect x="1" y="5" width="2" height="2" fill="#b0b0b0"/><rect x="1" y="7" width="2" height="1" fill="#000"/><rect x="5" y="1" width="2" height="2" fill="#b0b0b0"/><rect x="5" y="3" width="2" height="1" fill="#000"/><rect x="5" y="5" width="2" height="2" fill="#b0b0b0"/><rect x="5" y="7" width="2" height="1" fill="#000"/><rect x="9" y="1" width="2" height="2" fill="#b0b0b0"/><rect x="9" y="3" width="2" height="1" fill="#000"/><rect x="9" y="5" width="2" height="2" fill="#b0b0b0"/><rect x="9" y="7" width="2" height="1" fill="#000"/><rect x="13" y="1" width="2" height="2" fill="#b0b0b0"/><rect x="13" y="3" width="2" height="1" fill="#000"/><rect x="13" y="5" width="2" height="2" fill="#b0b0b0"/><rect x="13" y="7" width="2" height="1" fill="#000"/></svg>
<div style="left:1382px;top:776px;width:4px;height:240px;background:#3a3a3a;border-radius:2px;"></div>
<div style="left:10px;top:957px;width:36px;height:23px;background:#282828;border-radius:5px;box-shadow:inset 0 0 0 1px #3b3b3b;"></div>
<svg style="left:16px;top:961px;" width="18" height="18" viewBox="0 0 18 18">
<circle cx="9" cy="9" r="7.8" fill="#e8e8e8"/><polyline points="10.5,4.5 6,9 10.5,13.5" fill="none" stroke="#282828" stroke-width="2.2"/></svg>
<svg style="left:34.5px;top:966.25px;" width="10" height="6.5" viewBox="0 0 10 6.5"><polyline points="1,1 5.0,5.5 9,1" fill="none" stroke="#e0e0e0" stroke-width="1.4" stroke-linecap="round" stroke-linejoin="round"/></svg>
<div style="left:53px;top:957px;width:155px;height:23px;background:#282828;border-radius:5px;box-shadow:inset 0 0 0 1px #3b3b3b;"></div>
<div style="left:136px;top:958px;width:1px;height:22px;background:#3b3b3b;"></div>
<div style="left:62.20px;top:961.65px;font-size:14px;line-height:14px;color:#e0e0e0;white-space:pre;will-change:transform;">Playback</div>
<svg style="left:123.0px;top:966.75px;" width="10" height="6.5" viewBox="0 0 10 6.5"><polyline points="1,1 5.0,5.5 9,1" fill="none" stroke="#e0e0e0" stroke-width="1.4" stroke-linecap="round" stroke-linejoin="round"/></svg>
<div style="left:146.30px;top:961.65px;font-size:14px;line-height:14px;color:#e0e0e0;white-space:pre;will-change:transform;">Keying</div>
<svg style="left:195.5px;top:966.75px;" width="10" height="6.5" viewBox="0 0 10 6.5"><polyline points="1,1 5.0,5.5 9,1" fill="none" stroke="#e0e0e0" stroke-width="1.4" stroke-linecap="round" stroke-linejoin="round"/></svg>
<div style="left:220.00px;top:961.65px;font-size:14px;line-height:14px;color:#e0e0e0;white-space:pre;will-change:transform;">View</div>
<div style="left:267.30px;top:961.65px;font-size:14px;line-height:14px;color:#e0e0e0;white-space:pre;will-change:transform;">Marker</div>
<div style="left:358px;top:958px;width:46px;height:22px;background:#282828;border-radius:5px;box-shadow:inset 0 0 0 1px #303030;"></div>
<div style="left:358px;top:958px;width:23px;height:22.5px;background:#545454;border-radius:5px 0 0 5px;"></div>
<svg style="left:362px;top:962px;" width="14" height="14" viewBox="0 0 14 14"><circle cx="7" cy="7" r="5" fill="#e6e6e6"/></svg>
<svg style="left:387.5px;top:967.0px;" width="9" height="6" viewBox="0 0 9 6"><polyline points="1,1 4.5,5 8,1" fill="none" stroke="#5a5a5a" stroke-width="1.1" stroke-linecap="round" stroke-linejoin="round"/></svg>
<div style="left:411px;top:958px;width:142px;height:22.5px;background:#545454;border-radius:5px;"></div>
<div style="left:433.5px;top:958px;width:1px;height:22.5px;background:#3e3e3e;"></div>
<div style="left:457.5px;top:958px;width:1px;height:22.5px;background:#3e3e3e;"></div>
<div style="left:481.5px;top:958px;width:1px;height:22.5px;background:#3e3e3e;"></div>
<div style="left:505.5px;top:958px;width:1px;height:22.5px;background:#3e3e3e;"></div>
<div style="left:529.5px;top:958px;width:1px;height:22.5px;background:#3e3e3e;"></div>
<svg style="left:411px;top:958px;" width="142" height="22" viewBox="0 0 142 22">
<g fill="#e6e6e6">
<rect x="4.7" y="4.7" width="2.2" height="12.6"/><polygon points="16.2,4.7 16.2,17.3 7.8,11"/>
<polygon points="24,11 28.5,6.3 33,11 28.5,15.7"/><polygon points="43.1,5.5 43.1,16.5 34.8,11"/>
<polygon points="64.6,3.8 64.6,18.2 52,11"/>
<polygon points="76.2,3.8 76.2,18.2 88.8,11"/>
<polygon points="98,5.5 98,16.5 106.3,11"/><polygon points="107,11 111.5,6.3 116,11 111.5,15.7"/>
<polygon points="124.7,4.7 124.7,17.3 133.1,11"/><rect x="134.3" y="4.7" width="2.2" height="12.6"/>
</g></svg>
<div style="left:599px;top:958px;width:87.5px;height:22.5px;background:#545454;border-radius:5px;"></div>
<div style="left:622.50px;top:961.65px;width:40px;text-align:center;font-size:14px;line-height:14px;color:#e0e0e0;white-space:pre;will-change:transform;">1</div>
<div style="left:693px;top:958px;width:233px;height:22.5px;background:#545454;border-radius:5px;"></div>
<div style="left:715.5px;top:958px;width:1px;height:22.5px;background:#3e3e3e;"></div>
<div style="left:823.5px;top:958px;width:1px;height:22.5px;background:#3e3e3e;"></div>
<svg style="left:695px;top:959px;" width="20" height="20" viewBox="0 0 20 20">
<circle cx="10" cy="11.5" r="6.5" fill="none" stroke="#e6e6e6" stroke-width="1.4"/>
<polyline points="10,7.5 10,11.5 13,11.5" fill="none" stroke="#e6e6e6" stroke-width="1.3"/>
<line x1="7.5" y1="3" x2="12.5" y2="3" stroke="#e6e6e6" stroke-width="1.3"/><line x1="10" y1="3" x2="10" y2="5" stroke="#e6e6e6" stroke-width="1.3"/>
<line x1="15" y1="5.5" x2="17" y2="3.5" stroke="#e6e6e6" stroke-width="1.3"/></svg>
<div style="left:735.50px;top:961.65px;font-size:14px;line-height:14px;color:#e0e0e0;white-space:pre;will-change:transform;">Start</div>
<div style="left:766.70px;top:961.65px;width:40px;text-align:right;font-size:14px;line-height:14px;color:#e0e0e0;white-space:pre;will-change:transform;">1</div>
<div style="left:843.00px;top:961.65px;font-size:14px;line-height:14px;color:#e0e0e0;white-space:pre;will-change:transform;">End</div>
<div style="left:850.00px;top:961.65px;width:60px;text-align:right;font-size:14px;line-height:14px;color:#e0e0e0;white-space:pre;will-change:transform;">250</div>
<div style="left:34px;top:1010.5px;width:891px;height:15px;background:#282828;"></div>
<div style="left:34px;top:1005px;width:2px;height:20.5px;background:#4a7fd0;"></div>
<div style="left:10px;top:1012.8px;width:914px;height:9.8px;background:#555555;border-radius:5px;"></div>
<svg style="left:11px;top:1012.7px;" width="10" height="10" viewBox="0 0 10 10"><circle cx="4.5" cy="5" r="3.9" fill="#262626" stroke="#6a6a6a" stroke-width="0.9"/></svg>
<svg style="left:912.5px;top:1012.7px;" width="10" height="10" viewBox="0 0 10 10"><circle cx="5.5" cy="5" r="3.9" fill="#262626" stroke="#6a6a6a" stroke-width="0.9"/></svg>
<div style="left:32px;top:1010.5px;width:1px;height:2.3px;background:#161616;"></div>
<div style="left:32px;top:1022.6px;width:1px;height:3px;background:#161616;"></div>
<div style="left:67px;top:1010.5px;width:1px;height:2.3px;background:#161616;"></div>
<div style="left:67px;top:1022.6px;width:1px;height:3px;background:#161616;"></div>
<div style="left:101px;top:1010.5px;width:1px;height:2.3px;background:#161616;"></div>
<div style="left:101px;top:1022.6px;width:1px;height:3px;background:#161616;"></div>
<div style="left:136px;top:1010.5px;width:1px;height:2.3px;background:#161616;"></div>
<div style="left:136px;top:1022.6px;width:1px;height:3px;background:#161616;"></div>
<div style="left:171px;top:1010.5px;width:1px;height:2.3px;background:#161616;"></div>
<div style="left:171px;top:1022.6px;width:1px;height:3px;background:#161616;"></div>
<div style="left:206px;top:1010.5px;width:1px;height:2.3px;background:#161616;"></div>
<div style="left:206px;top:1022.6px;width:1px;height:3px;background:#161616;"></div>
<div style="left:240px;top:1010.5px;width:1px;height:2.3px;background:#161616;"></div>
<div style="left:240px;top:1022.6px;width:1px;height:3px;background:#161616;"></div>
<div style="left:275px;top:1010.5px;width:1px;height:2.3px;background:#161616;"></div>
<div style="left:275px;top:1022.6px;width:1px;height:3px;background:#161616;"></div>
<div style="left:310px;top:1010.5px;width:1px;height:2.3px;background:#161616;"></div>
<div style="left:310px;top:1022.6px;width:1px;height:3px;background:#161616;"></div>
<div style="left:344px;top:1010.5px;width:1px;height:2.3px;background:#161616;"></div>
<div style="left:344px;top:1022.6px;width:1px;height:3px;background:#161616;"></div>
<div style="left:379px;top:1010.5px;width:1px;height:2.3px;background:#161616;"></div>
<div style="left:379px;top:1022.6px;width:1px;height:3px;background:#161616;"></div>
<div style="left:414px;top:1010.5px;width:1px;height:2.3px;background:#161616;"></div>
<div style="left:414px;top:1022.6px;width:1px;height:3px;background:#161616;"></div>
<div style="left:449px;top:1010.5px;width:1px;height:2.3px;background:#161616;"></div>
<div style="left:449px;top:1022.6px;width:1px;height:3px;background:#161616;"></div>
<div style="left:483px;top:1010.5px;width:1px;height:2.3px;background:#161616;"></div>
<div style="left:483px;top:1022.6px;width:1px;height:3px;background:#161616;"></div>
<div style="left:518px;top:1010.5px;width:1px;height:2.3px;background:#161616;"></div>
<div style="left:518px;top:1022.6px;width:1px;height:3px;background:#161616;"></div>
<div style="left:553px;top:1010.5px;width:1px;height:2.3px;background:#161616;"></div>
<div style="left:553px;top:1022.6px;width:1px;height:3px;background:#161616;"></div>
<div style="left:588px;top:1010.5px;width:1px;height:2.3px;background:#161616;"></div>
<div style="left:588px;top:1022.6px;width:1px;height:3px;background:#161616;"></div>
<div style="left:622px;top:1010.5px;width:1px;height:2.3px;background:#161616;"></div>
<div style="left:622px;top:1022.6px;width:1px;height:3px;background:#161616;"></div>
<div style="left:657px;top:1010.5px;width:1px;height:2.3px;background:#161616;"></div>
<div style="left:657px;top:1022.6px;width:1px;height:3px;background:#161616;"></div>
<div style="left:692px;top:1010.5px;width:1px;height:2.3px;background:#161616;"></div>
<div style="left:692px;top:1022.6px;width:1px;height:3px;background:#161616;"></div>
<div style="left:726px;top:1010.5px;width:1px;height:2.3px;background:#161616;"></div>
<div style="left:726px;top:1022.6px;width:1px;height:3px;background:#161616;"></div>
<div style="left:761px;top:1010.5px;width:1px;height:2.3px;background:#161616;"></div>
<div style="left:761px;top:1022.6px;width:1px;height:3px;background:#161616;"></div>
<div style="left:796px;top:1010.5px;width:1px;height:2.3px;background:#161616;"></div>
<div style="left:796px;top:1022.6px;width:1px;height:3px;background:#161616;"></div>
<div style="left:831px;top:1010.5px;width:1px;height:2.3px;background:#161616;"></div>
<div style="left:831px;top:1022.6px;width:1px;height:3px;background:#161616;"></div>
<div style="left:865px;top:1010.5px;width:1px;height:2.3px;background:#161616;"></div>
<div style="left:865px;top:1022.6px;width:1px;height:3px;background:#161616;"></div>
<div style="left:900px;top:1010.5px;width:1px;height:2.3px;background:#161616;"></div>
<div style="left:900px;top:1022.6px;width:1px;height:3px;background:#161616;"></div>
<div style="left:81.40px;top:989.95px;width:40px;text-align:center;font-size:14px;line-height:14px;color:#b4b4b4;white-space:pre;will-change:transform;">20</div>
<div style="left:150.86px;top:989.95px;width:40px;text-align:center;font-size:14px;line-height:14px;color:#b4b4b4;white-space:pre;will-change:transform;">40</div>
<div style="left:220.31px;top:989.95px;width:40px;text-align:center;font-size:14px;line-height:14px;color:#b4b4b4;white-space:pre;will-change:transform;">60</div>
<div style="left:289.77px;top:989.95px;width:40px;text-align:center;font-size:14px;line-height:14px;color:#b4b4b4;white-space:pre;will-change:transform;">80</div>
<div style="left:359.22px;top:989.95px;width:40px;text-align:center;font-size:14px;line-height:14px;color:#b4b4b4;white-space:pre;will-change:transform;">100</div>
<div style="left:428.67px;top:989.95px;width:40px;text-align:center;font-size:14px;line-height:14px;color:#b4b4b4;white-space:pre;will-change:transform;">120</div>
<div style="left:498.13px;top:989.95px;width:40px;text-align:center;font-size:14px;line-height:14px;color:#b4b4b4;white-space:pre;will-change:transform;">140</div>
<div style="left:567.58px;top:989.95px;width:40px;text-align:center;font-size:14px;line-height:14px;color:#b4b4b4;white-space:pre;will-change:transform;">160</div>
<div style="left:637.04px;top:989.95px;width:40px;text-align:center;font-size:14px;line-height:14px;color:#b4b4b4;white-space:pre;will-change:transform;">180</div>
<div style="left:706.49px;top:989.95px;width:40px;text-align:center;font-size:14px;line-height:14px;color:#b4b4b4;white-space:pre;will-change:transform;">200</div>
<div style="left:775.94px;top:989.95px;width:40px;text-align:center;font-size:14px;line-height:14px;color:#b4b4b4;white-space:pre;will-change:transform;">220</div>
<div style="left:845.40px;top:989.95px;width:40px;text-align:center;font-size:14px;line-height:14px;color:#b4b4b4;white-space:pre;will-change:transform;">240</div>
<div style="left:20px;top:987px;width:29px;height:20px;background:#4772b3;border-radius:5px;"></div>
<div style="left:20.50px;top:990.15px;width:28px;text-align:center;font-size:14px;line-height:14px;color:#ffffff;white-space:pre;will-change:transform;">1</div>
<svg style="left:0.75px;top:1004.5px;" width="6.5" height="10" viewBox="0 0 6.5 10"><polyline points="1,1 5.5,5.0 1,9" fill="none" stroke="#6a6a6a" stroke-width="1.3" stroke-linecap="round" stroke-linejoin="round"/></svg>
<svg style="left:925px;top:996px;" width="6" height="10" viewBox="0 0 6 10"><polyline points="4.5,1 1,5 4.5,9" fill="none" stroke="#6a6a6a" stroke-width="1.1"/></svg>
<div style="left:929.5px;top:995px;width:3px;height:29px;background:#2e2e2e;border-radius:1.5px;"></div>
<svg style="left:14px;top:1029.5px;" width="13" height="19" viewBox="0 0 13 19"><rect x="1" y="1" width="11" height="17" rx="5.5" fill="none" stroke="#a0a0a0" stroke-width="1.2"/><path d="M1.5,8 L1.5,6 A5,5 0 0 1 6,1.5 L6,8 Z" fill="#a0a0a0"/></svg>
<div style="left:40.50px;top:1031.05px;font-size:14px;line-height:14px;color:#a0a0a0;white-space:pre;will-change:transform;">Select</div>
<svg style="left:292px;top:1029.5px;" width="13" height="19" viewBox="0 0 13 19"><rect x="1" y="1" width="11" height="17" rx="5.5" fill="none" stroke="#a0a0a0" stroke-width="1.2"/><rect x="5.3" y="3.5" width="2.4" height="5" rx="1" fill="#a0a0a0"/></svg>
<div style="left:319.00px;top:1031.05px;font-size:14px;line-height:14px;color:#a0a0a0;white-space:pre;will-change:transform;">Pan View</div>
<svg style="left:572px;top:1029.5px;" width="13" height="19" viewBox="0 0 13 19"><rect x="1" y="1" width="11" height="17" rx="5.5" fill="none" stroke="#a0a0a0" stroke-width="1.2"/><path d="M11.5,8 L11.5,6 A5,5 0 0 0 7,1.5 L7,8 Z" fill="#a0a0a0"/></svg>
<div style="left:598.00px;top:1031.05px;font-size:14px;line-height:14px;color:#a0a0a0;white-space:pre;will-change:transform;">Context Menu</div>
<div style="left:1314.00px;top:1031.05px;width:60px;text-align:right;font-size:14px;line-height:14px;color:#a0a0a0;white-space:pre;will-change:transform;">3.6.2</div>
<svg style="left:8px;top:32px;" width="28" height="24" viewBox="0 0 28 24">
<circle cx="14.6" cy="13.9" r="4.95" fill="none" stroke="#e0e0e0" stroke-width="2.5"/>
<circle cx="14.6" cy="13.9" r="2" fill="#e0e0e0"/>
<path d="M12.9,4.6 L19.8,10.2" stroke="#e0e0e0" stroke-width="2.4" stroke-linecap="round"/>
<path d="M5.4,8.4 L14,8.1" stroke="#e0e0e0" stroke-width="2.4" stroke-linecap="round"/>
<path d="M4,15.9 L10.6,10.6" stroke="#e0e0e0" stroke-width="2.4" stroke-linecap="round"/></svg>
<div style="left:915px;top:32px;width:229px;height:24px;background:#1d1d1d;border-radius:5px;box-shadow:inset 0 0 0 1px #363636;"></div>
<div style="left:915.5px;top:33px;width:37.5px;height:22px;background:#282828;border-radius:5px 0 0 5px;"></div>
<div style="left:952.5px;top:33px;width:1px;height:22px;background:#363636;"></div>
<svg style="left:919px;top:35px;" width="22" height="20" viewBox="0 0 22 20">
<path d="M6.5,2 L10.5,10 A4.2,4.2 0 0 1 3.5,14.5 L2,14 Z" fill="#d8d8d8"/>
<circle cx="14.5" cy="4.2" r="2.4" fill="#e0e0e0"/>
<circle cx="12.5" cy="13.5" r="4.8" fill="#282828" stroke="#e0e0e0" stroke-width="1.3"/>
<path d="M10.8,12.3 a1.8,1.8 0 0 1 1.6,-1.6" stroke="#e0e0e0" stroke-width="0.9" fill="none"/></svg>
<svg style="left:940.0px;top:41.75px;" width="10" height="6.5" viewBox="0 0 10 6.5"><polyline points="1,1 5.0,5.5 9,1" fill="none" stroke="#e0e0e0" stroke-width="1.4" stroke-linecap="round" stroke-linejoin="round"/></svg>
<div style="left:962.30px;top:36.65px;font-size:14px;line-height:14px;color:#e0e0e0;white-space:pre;will-change:transform;">Scene</div>
<svg style="left:1072px;top:35px;" width="20" height="20" viewBox="0 0 20 20">
<path d="M12,2.5 L17.5,8 L15.8,9 L12.5,12.5 L12.3,15.5 L4.5,7.7 L7.5,7.5 L11,4.2 Z" fill="none" stroke="#8a8a8a" stroke-width="1.2" stroke-linejoin="round"/>
<line x1="8" y1="12" x2="2.5" y2="17.5" stroke="#8a8a8a" stroke-width="1.3"/></svg>
<div style="left:1096px;top:33px;width:24.5px;height:22px;background:#545454;"></div>
<svg style="left:1098px;top:35px;" width="20" height="20" viewBox="0 0 20 20">
<path d="M7.5,2.5 L13.5,2.5 L16.5,5.5 L16.5,13.5 L7.5,13.5 Z" fill="none" stroke="#e6e6e6" stroke-width="1.3"/>
<path d="M13,2.5 L13,6 L16.5,6" fill="none" stroke="#e6e6e6" stroke-width="1.1"/>
<polyline points="7.5,6.5 3.5,6.5 3.5,17.5 12.5,17.5 12.5,13.5" fill="none" stroke="#e6e6e6" stroke-width="1.3"/></svg>
<div style="left:1120.5px;top:33px;width:23px;height:22px;background:#3d3d3d;border-radius:0 5px 5px 0;"></div>
<svg style="left:1122px;top:35px;" width="20" height="20" viewBox="0 0 20 20"><path d="M5,5 L15,15 M15,5 L5,15" stroke="#7a7a7a" stroke-width="1.3"/></svg>
<div style="left:1151px;top:32px;width:229px;height:24px;background:#1d1d1d;border-radius:5px;box-shadow:inset 0 0 0 1px #363636;"></div>
<div style="left:1151.2px;top:33px;width:36px;height:22px;background:#282828;border-radius:5px 0 0 5px;"></div>
<div style="left:1187px;top:33px;width:1px;height:22px;background:#363636;"></div>
<svg style="left:1154px;top:35px;" width="20" height="20" viewBox="0 0 20 20">
<rect x="2.5" y="7.5" width="10" height="10" fill="none" stroke="#a8a8a8" stroke-width="1.2"/>
<rect x="4.5" y="5.5" width="10" height="10" fill="#282828" stroke="#c8c8c8" stroke-width="1.2"/>
<rect x="6.5" y="3.5" width="11" height="11" fill="#282828" stroke="#e0e0e0" stroke-width="1.3"/>
<polygon points="7.5,13.5 11,7.5 13.5,10.5 14.5,9.5 17,13.5" fill="#e0e0e0"/><circle cx="15" cy="6" r="1" fill="#e0e0e0"/></svg>
<svg style="left:1175.0px;top:41.75px;" width="10" height="6.5" viewBox="0 0 10 6.5"><polyline points="1,1 5.0,5.5 9,1" fill="none" stroke="#e0e0e0" stroke-width="1.4" stroke-linecap="round" stroke-linejoin="round"/></svg>
<div style="left:1197.00px;top:36.65px;font-size:14px;line-height:14px;color:#e0e0e0;white-space:pre;will-change:transform;">ViewLayer</div>
<div style="left:1331px;top:33px;width:24px;height:22px;background:#545454;"></div>
<svg style="left:1333px;top:35px;" width="20" height="20" viewBox="0 0 20 20">
<path d="M7.5,2.5 L13.5,2.5 L16.5,5.5 L16.5,13.5 L7.5,13.5 Z" fill="none" stroke="#e6e6e6" stroke-width="1.3"/>
<path d="M13,2.5 L13,6 L16.5,6" fill="none" stroke="#e6e6e6" stroke-width="1.1"/>
<polyline points="7.5,6.5 3.5,6.5 3.5,17.5 12.5,17.5 12.5,13.5" fill="none" stroke="#e6e6e6" stroke-width="1.3"/></svg>
<div style="left:1355px;top:33px;width:24px;height:22px;background:#3d3d3d;border-radius:0 5px 5px 0;"></div>
<svg style="left:1357px;top:35px;" width="20" height="20" viewBox="0 0 20 20"><path d="M5,5 L15,15 M15,5 L5,15" stroke="#7a7a7a" stroke-width="1.3"/></svg>
<div style="left:0px;top:0px;width:1389px;height:1px;background:#1f1f1f;"></div>
<div style="left:1302px;top:13px;width:6px;height:2.2px;background:#b4b4b4;"></div>
<svg style="left:1334px;top:11px;" width="7" height="7" viewBox="0 0 7 7"><polygon points="1.6,0 6.2,0 6.2,4.6" fill="#b4b4b4"/><polygon points="0,1.6 0,6.2 4.6,6.2" fill="#b4b4b4"/></svg>
<svg style="left:1361px;top:6px;" width="16" height="16" viewBox="0 0 16 16"><circle cx="8" cy="8" r="7" fill="#5f7fd8"/><path d="M5.3,5.3 L10.7,10.7 M10.7,5.3 L5.3,10.7" stroke="#1a1a1a" stroke-width="1.5"/></svg>
</body></html>
